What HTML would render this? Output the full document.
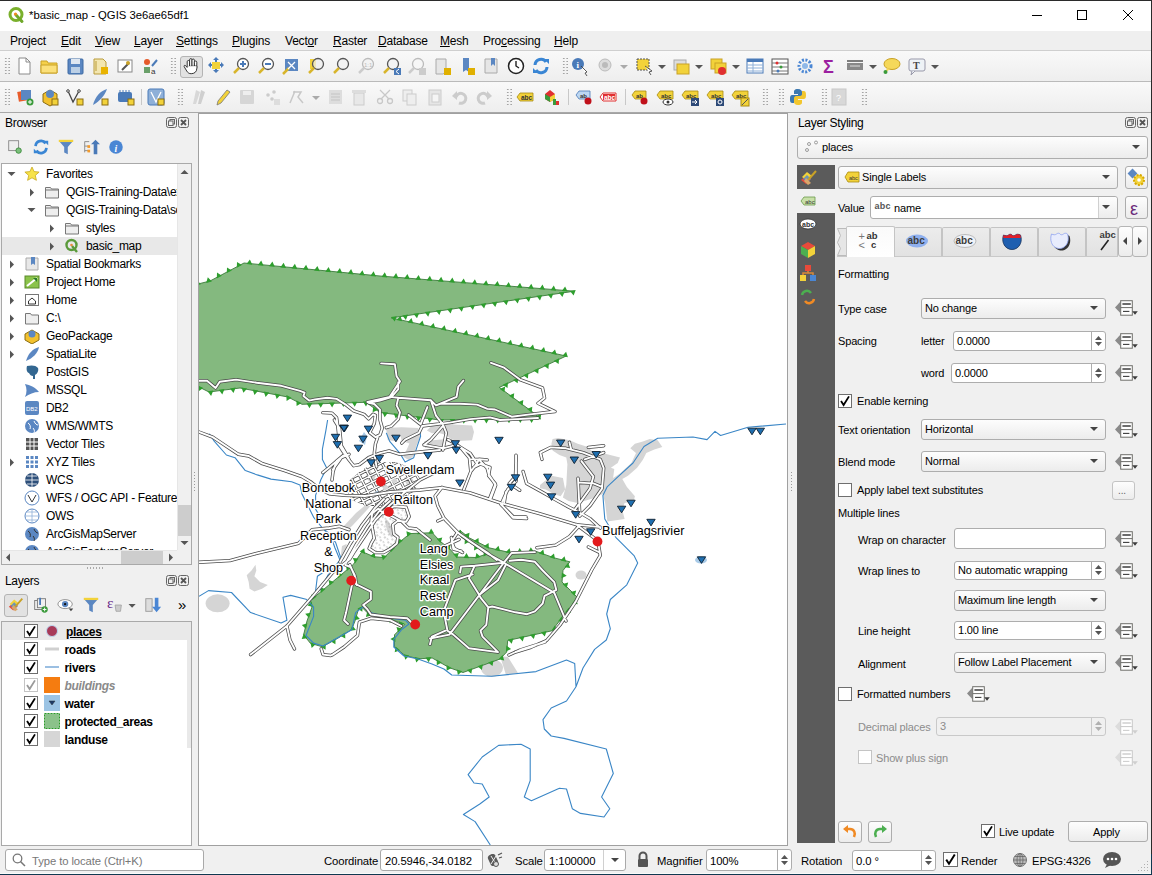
<!DOCTYPE html><html><head><meta charset="utf-8"><title>QGIS</title><style>
*{margin:0;padding:0;box-sizing:border-box}
html,body{width:1152px;height:875px;overflow:hidden;background:#f0f0f0;font-family:"Liberation Sans",sans-serif;}
.t{position:absolute;white-space:nowrap;line-height:1;}
.a{position:absolute}
</style></head><body><div style="position:absolute;left:0px;top:0px;width:1152px;height:31px;background:#fff"></div><div style="position:absolute;left:0px;top:0px;width:1152px;height:1px;background:#2b2b2b"></div><div style="position:absolute;left:1151px;top:0px;width:1px;height:875px;background:#2b2b2b"></div><svg class="a" style="left:7px;top:6px" width="18" height="18" viewBox="0 0 18 18">
<circle cx="9" cy="8.5" r="6" fill="none" stroke="#7ab02c" stroke-width="3"/>
<line x1="9" y1="9" x2="15" y2="15.5" stroke="#6fa82a" stroke-width="3" stroke-linecap="round"/>
<circle cx="8.5" cy="8" r="1.6" fill="#f08a24"/></svg><div class="t" style="left:29px;top:10px;font-size:11.3px;color:#000;font-weight:normal;font-style:normal;">*basic_map - QGIS 3e6ae65df1</div><div style="position:absolute;left:1032px;top:15px;width:10px;height:1px;background:#000"></div><div style="position:absolute;left:1077px;top:10px;width:10px;height:10px;border:1px solid #000"></div><svg class="a" style="left:1122px;top:9px" width="12" height="12"><path d="M1 1L11 11M11 1L1 11" stroke="#000" stroke-width="1"/></svg><div style="position:absolute;left:0px;top:31px;width:1151px;height:20px;background:#efefef;border-bottom:1px solid #cfcfcf"></div><div class="t" style="left:10px;top:35px;font-size:12px;color:#000;font-weight:normal;font-style:normal;letter-spacing:-0.2px;">Pro<u>j</u>ect</div><div class="t" style="left:61px;top:35px;font-size:12px;color:#000;font-weight:normal;font-style:normal;letter-spacing:-0.2px;"><u>E</u>dit</div><div class="t" style="left:95px;top:35px;font-size:12px;color:#000;font-weight:normal;font-style:normal;letter-spacing:-0.2px;"><u>V</u>iew</div><div class="t" style="left:134px;top:35px;font-size:12px;color:#000;font-weight:normal;font-style:normal;letter-spacing:-0.2px;"><u>L</u>ayer</div><div class="t" style="left:176px;top:35px;font-size:12px;color:#000;font-weight:normal;font-style:normal;letter-spacing:-0.2px;"><u>S</u>ettings</div><div class="t" style="left:232px;top:35px;font-size:12px;color:#000;font-weight:normal;font-style:normal;letter-spacing:-0.2px;"><u>P</u>lugins</div><div class="t" style="left:285px;top:35px;font-size:12px;color:#000;font-weight:normal;font-style:normal;letter-spacing:-0.2px;">Vect<u>o</u>r</div><div class="t" style="left:333px;top:35px;font-size:12px;color:#000;font-weight:normal;font-style:normal;letter-spacing:-0.2px;"><u>R</u>aster</div><div class="t" style="left:378px;top:35px;font-size:12px;color:#000;font-weight:normal;font-style:normal;letter-spacing:-0.2px;"><u>D</u>atabase</div><div class="t" style="left:440px;top:35px;font-size:12px;color:#000;font-weight:normal;font-style:normal;letter-spacing:-0.2px;"><u>M</u>esh</div><div class="t" style="left:483px;top:35px;font-size:12px;color:#000;font-weight:normal;font-style:normal;letter-spacing:-0.2px;">Pro<u>c</u>essing</div><div class="t" style="left:554px;top:35px;font-size:12px;color:#000;font-weight:normal;font-style:normal;letter-spacing:-0.2px;"><u>H</u>elp</div><div style="position:absolute;left:0px;top:51px;width:1151px;height:31px;background:linear-gradient(#f9f9f9,#eeeeee);border-bottom:1px solid #bababa"></div><div style="position:absolute;left:0px;top:82px;width:1151px;height:30px;background:linear-gradient(#f9f9f9,#eeeeee)"></div><div style="position:absolute;left:0px;top:112px;width:1151px;height:1px;background:#a8a8a8"></div><div class="a" style="left:4px;top:57px;width:6px;height:18px;background-image:radial-gradient(circle,#a4a4a4 0.75px,transparent 0.95px);background-size:3.5px 3px"></div><svg class="a" style="left:14px;top:56px" width="20" height="20" viewBox="0 0 20 20"><path d="M5 2h7l4 4v12H5z" fill="#fff" stroke="#8a8a8a"/><path d="M12 2v4h4" fill="none" stroke="#8a8a8a"/></svg><svg class="a" style="left:39px;top:56px" width="20" height="20" viewBox="0 0 20 20"><path d="M2 5h6l1 2h9v10H2z" fill="#f5d04a" stroke="#c9a227"/><path d="M2 9h16v8H2z" fill="#fbe07a" stroke="#c9a227"/></svg><svg class="a" style="left:65px;top:56px" width="20" height="20" viewBox="0 0 20 20"><rect x="3" y="3" width="15" height="15" rx="1" fill="#5b87c2" stroke="#3f6aa3"/><rect x="6" y="3" width="9" height="5" fill="#dfe7f1"/><rect x="6" y="11" width="9" height="6" fill="#bcd0e6"/></svg><svg class="a" style="left:90px;top:56px" width="20" height="20" viewBox="0 0 20 20"><path d="M4 3h9l3 3v12H4z" fill="#f3e6b0" stroke="#b99b3a"/><rect x="11" y="11" width="7" height="7" fill="#e9b300"/><path d="M6 5v10" stroke="#b99b3a"/></svg><svg class="a" style="left:115px;top:56px" width="20" height="20" viewBox="0 0 20 20"><rect x="3" y="4" width="14" height="12" fill="#fff" stroke="#888"/><path d="M7 14l7-7" stroke="#555" stroke-width="2"/><circle cx="13" cy="7" r="2" fill="#c9a227"/></svg><svg class="a" style="left:140px;top:56px" width="20" height="20" viewBox="0 0 20 20"><circle cx="7" cy="6" r="3" fill="#e55b2b"/><rect x="4" y="11" width="6" height="6" fill="#6aa06a"/><path d="M12 10l5-6" stroke="#4a7ab8" stroke-width="2"/><text x="11" y="18" font-size="8" fill="#333" font-family="Liberation Sans">a</text></svg><div class="a" style="left:170px;top:57px;width:6px;height:18px;background-image:radial-gradient(circle,#a4a4a4 0.75px,transparent 0.95px);background-size:3.5px 3px"></div><div style="position:absolute;left:180px;top:56px;width:23px;height:22px;background:#e2e2e2;border:1px solid #b4b4b4;border-radius:3px"></div><svg class="a" style="left:181px;top:56px" width="20" height="20" viewBox="0 0 20 20"><g fill="#fff" stroke="#222" stroke-width="0.9"><rect x="6.2" y="4.5" width="2.4" height="8" rx="1.2"/><rect x="8.6" y="2.6" width="2.4" height="9" rx="1.2"/><rect x="11" y="3" width="2.4" height="9" rx="1.2"/><rect x="13.4" y="5" width="2.4" height="8" rx="1.2"/><path d="M6.2 10.5v1L4.6 9.6c-.8-.8-2 .1-1.4 1.1l2.6 4.4c1 1.7 2.4 2.6 4.4 2.6 3 0 5.6-1.8 5.6-5.2V10z"/></g><path d="M6.6 10.2h8.8v1.5H6.6z" fill="#fff"/></svg><svg class="a" style="left:206px;top:56px" width="20" height="20" viewBox="0 0 20 20"><path d="M10 1l3 3h-2v4h4v-2l3 3-3 3v-2h-4v4h2l-3 3-3-3h2v-4H5v2L2 9l3-3v2h4V4H7z" fill="#4a7ab8"/><rect x="6" y="6" width="8" height="7" fill="#f2d23a"/></svg><svg class="a" style="left:231px;top:56px" width="20" height="20" viewBox="0 0 20 20"><circle cx="12" cy="8" r="5.5" fill="#fff" stroke="#555" stroke-width="1.3"/><path d="M9 8h6M12 5v6" stroke="#4a7ab8" stroke-width="2"/><path d="M8 12l-5 5" stroke="#d8b52c" stroke-width="2.5"/></svg><svg class="a" style="left:256px;top:56px" width="20" height="20" viewBox="0 0 20 20"><circle cx="12" cy="8" r="5.5" fill="#fff" stroke="#555" stroke-width="1.3"/><path d="M9 8h6" stroke="#4a7ab8" stroke-width="2"/><path d="M8 12l-5 5" stroke="#d8b52c" stroke-width="2.5"/></svg><svg class="a" style="left:280px;top:56px" width="20" height="20" viewBox="0 0 20 20"><rect x="5" y="3" width="13" height="12" fill="#5b87c2"/><path d="M3 18l6-6" stroke="#d8b52c" stroke-width="2.5"/><path d="M8 6l7 7M15 6l-7 7" stroke="#fff" stroke-width="1.3"/></svg><svg class="a" style="left:306px;top:56px" width="20" height="20" viewBox="0 0 20 20"><rect x="4" y="3" width="6" height="10" fill="#f2d23a"/><circle cx="12" cy="8" r="5.5" fill="#eee" fill-opacity="0.7" stroke="#555" stroke-width="1.3"/><path d="M8 12l-5 5" stroke="#d8b52c" stroke-width="2.5"/></svg><svg class="a" style="left:331px;top:56px" width="20" height="20" viewBox="0 0 20 20"><circle cx="12" cy="8" r="5.5" fill="#f3f3f3" stroke="#555" stroke-width="1.3"/><path d="M8 12l-5 5" stroke="#d8b52c" stroke-width="2.5"/></svg><svg class="a" style="left:356px;top:56px" width="20" height="20" viewBox="0 0 20 20"><circle cx="12" cy="8" r="5.5" fill="#f3f3f3" stroke="#bbb" stroke-width="1.3"/><path d="M8 12l-5 5" stroke="#ccc" stroke-width="2.5"/><text x="8" y="11" font-size="6" fill="#bbb" font-family="Liberation Sans">1:1</text></svg><svg class="a" style="left:382px;top:56px" width="20" height="20" viewBox="0 0 20 20"><circle cx="11" cy="8" r="5.5" fill="#f3f3f3" stroke="#555" stroke-width="1.3"/><path d="M7 12l-5 5" stroke="#d8b52c" stroke-width="2.5"/><rect x="12" y="12" width="7" height="7" fill="#4a7ab8"/><path d="M17 13l-3 2.5 3 2.5" stroke="#fff" fill="none"/></svg><svg class="a" style="left:407px;top:56px" width="20" height="20" viewBox="0 0 20 20"><circle cx="11" cy="8" r="5.5" fill="#f6f6f6" stroke="#bbb" stroke-width="1.3"/><path d="M7 12l-5 5" stroke="#ccc" stroke-width="2.5"/><rect x="12" y="12" width="7" height="7" fill="#ccc"/></svg><svg class="a" style="left:432px;top:56px" width="20" height="20" viewBox="0 0 20 20"><path d="M4 3h10v13l-3 2H4z" fill="#e6e6e6" stroke="#aaa"/><rect x="12" y="12" width="7" height="7" fill="#e0b000"/></svg><svg class="a" style="left:457px;top:56px" width="20" height="20" viewBox="0 0 20 20"><path d="M6 2h6v14l-3-2-3 2z" fill="#5b87c2"/><rect x="11" y="12" width="7" height="7" fill="#e0b000"/></svg><svg class="a" style="left:481px;top:56px" width="20" height="20" viewBox="0 0 20 20"><path d="M4 3h12v14H4z" fill="#e6e6e6" stroke="#aaa"/><path d="M10 2h4v8l-2-2-2 2z" fill="#5b87c2"/></svg><svg class="a" style="left:506px;top:56px" width="20" height="20" viewBox="0 0 20 20"><circle cx="10" cy="10" r="7.5" fill="#fff" stroke="#222" stroke-width="1.5"/><path d="M10 5v5l3 2" stroke="#222" stroke-width="1.4" fill="none"/></svg><svg class="a" style="left:531px;top:56px" width="20" height="20" viewBox="0 0 20 20"><path d="M4 9a6 6 0 0 1 11-3" stroke="#3a86d4" stroke-width="3" fill="none"/><path d="M16 11a6 6 0 0 1-11 3" stroke="#3a86d4" stroke-width="3" fill="none"/><path d="M13 3h5v5z M7 17H2v-5z" fill="#3a86d4"/></svg><div class="a" style="left:562px;top:57px;width:6px;height:18px;background-image:radial-gradient(circle,#a4a4a4 0.75px,transparent 0.95px);background-size:3.5px 3px"></div><svg class="a" style="left:570px;top:56px" width="20" height="20" viewBox="0 0 20 20"><circle cx="8" cy="8" r="6" fill="#4a7ab8"/><text x="6.5" y="12" font-size="9" font-weight="bold" fill="#fff" font-family="Liberation Serif">i</text><path d="M11 10l6 6-2 1 2 3" stroke="#333" fill="#fff" stroke-width="0.8"/></svg><svg class="a" style="left:596px;top:56px" width="20" height="20" viewBox="0 0 20 20"><circle cx="9" cy="9" r="6" fill="#ddd" stroke="#bbb"/><circle cx="9" cy="9" r="3" fill="#bbb"/></svg><svg class="a" style="left:614px;top:56px" width="20" height="20" viewBox="0 0 20 20"><path d="M6 9h8l-4 4z" fill="#aaa"/></svg><svg class="a" style="left:634px;top:56px" width="20" height="20" viewBox="0 0 20 20"><rect x="3" y="3" width="12" height="11" fill="#f2d23a" stroke="#555" stroke-dasharray="2 1"/><path d="M11 10l7 5-3 1 2 3" fill="#fff" stroke="#333" stroke-width="0.8"/></svg><svg class="a" style="left:652px;top:56px" width="20" height="20" viewBox="0 0 20 20"><path d="M6 9h8l-4 4z" fill="#555"/></svg><svg class="a" style="left:671px;top:56px" width="20" height="20" viewBox="0 0 20 20"><rect x="3" y="4" width="12" height="10" fill="#ddd" stroke="#aaa"/><rect x="6" y="8" width="12" height="10" fill="#f2d23a" stroke="#c9a227"/></svg><svg class="a" style="left:689px;top:56px" width="20" height="20" viewBox="0 0 20 20"><path d="M6 9h8l-4 4z" fill="#555"/></svg><svg class="a" style="left:708px;top:56px" width="20" height="20" viewBox="0 0 20 20"><rect x="3" y="3" width="11" height="10" fill="#f2d23a" stroke="#c9a227"/><rect x="7" y="7" width="11" height="10" fill="#f2d23a" stroke="#c9a227"/><circle cx="14" cy="15" r="4" fill="#e03030"/></svg><svg class="a" style="left:726px;top:56px" width="20" height="20" viewBox="0 0 20 20"><path d="M6 9h8l-4 4z" fill="#555"/></svg><svg class="a" style="left:745px;top:56px" width="20" height="20" viewBox="0 0 20 20"><rect x="2" y="3" width="16" height="14" fill="#fff" stroke="#4a7ab8"/><rect x="2" y="3" width="16" height="3" fill="#4a7ab8"/><path d="M2 9h16M2 12h16M2 15h16M8 6v11" stroke="#8fb0d8"/></svg><svg class="a" style="left:770px;top:56px" width="20" height="20" viewBox="0 0 20 20"><rect x="2" y="3" width="16" height="15" fill="#fff" stroke="#555"/><path d="M2 7h16M2 11h16M2 15h16" stroke="#777"/><circle cx="7" cy="7" r="1.5" fill="#e03030"/><circle cx="11" cy="11" r="1.5" fill="#3a9a3a"/><circle cx="8" cy="15" r="1.5" fill="#4a7ab8"/></svg><svg class="a" style="left:795px;top:56px" width="20" height="20" viewBox="0 0 20 20"><circle cx="10" cy="10" r="6" fill="none" stroke="#4a86d4" stroke-width="3" stroke-dasharray="2 1.5"/><circle cx="10" cy="10" r="3" fill="#8fb8e8"/></svg><svg class="a" style="left:820px;top:56px" width="20" height="20" viewBox="0 0 20 20"><text x="3" y="17" font-size="18" font-weight="bold" fill="#9b1fa0" font-family="Liberation Sans">&#931;</text></svg><svg class="a" style="left:845px;top:56px" width="20" height="20" viewBox="0 0 20 20"><rect x="2" y="7" width="16" height="7" fill="#888"/><path d="M2 5h16" stroke="#555" stroke-width="1.5"/><path d="M5 10h10" stroke="#ddd"/></svg><svg class="a" style="left:863px;top:56px" width="20" height="20" viewBox="0 0 20 20"><path d="M6 9h8l-4 4z" fill="#555"/></svg><svg class="a" style="left:881px;top:56px" width="20" height="20" viewBox="0 0 20 20"><ellipse cx="11" cy="8" rx="8" ry="5.5" fill="#f5d85a" stroke="#c9a227"/><path d="M6 12l-2 5 5-4" fill="#f5d85a"/><circle cx="4.5" cy="16" r="2" fill="#3a9a3a"/></svg><svg class="a" style="left:907px;top:56px" width="20" height="20" viewBox="0 0 20 20"><rect x="2" y="3" width="16" height="12" rx="2" fill="#eef2f6" stroke="#99a"/><path d="M5 15l-1 4 4-4" fill="#eef2f6" stroke="#99a"/><text x="6" y="13" font-size="10" font-weight="bold" fill="#444" font-family="Liberation Serif">T</text></svg><svg class="a" style="left:925px;top:56px" width="20" height="20" viewBox="0 0 20 20"><path d="M6 9h8l-4 4z" fill="#555"/></svg><div class="a" style="left:4px;top:88px;width:6px;height:18px;background-image:radial-gradient(circle,#a4a4a4 0.75px,transparent 0.95px);background-size:3.5px 3px"></div><svg class="a" style="left:15px;top:87px" width="20" height="20" viewBox="0 0 20 20"><rect x="3" y="4" width="10" height="10" fill="#e85c2b" transform="rotate(-10 8 9)"/><rect x="6" y="3" width="10" height="10" fill="#5b87c2"/><circle cx="15" cy="15" r="3.5" fill="#3a9a3a"/><path d="M13 15h4M15 13v4" stroke="#fff"/></svg><svg class="a" style="left:40px;top:87px" width="20" height="20" viewBox="0 0 20 20"><path d="M3 7l7-4 7 4v8l-7 4-7-4z" fill="#f2c12e" stroke="#8a6d14"/><circle cx="10" cy="7" r="4" fill="#5b87c2"/><rect x="12" y="12" width="6" height="6" fill="#f2d23a" stroke="#8a6d14"/></svg><svg class="a" style="left:65px;top:87px" width="20" height="20" viewBox="0 0 20 20"><path d="M3 4l5 11 6-11" fill="none" stroke="#444" stroke-width="1.3"/><circle cx="3" cy="4" r="1.3" fill="#fff" stroke="#444"/><circle cx="14" cy="4" r="1.3" fill="#fff" stroke="#444"/><rect x="12" y="12" width="6" height="6" fill="#f2d23a" stroke="#8a6d14"/></svg><svg class="a" style="left:90px;top:87px" width="20" height="20" viewBox="0 0 20 20"><path d="M3 18C5 10 10 4 17 2c-2 6-7 12-14 16z" fill="#5b87c2"/><rect x="12" y="12" width="6" height="6" fill="#f2d23a" stroke="#8a6d14"/></svg><svg class="a" style="left:116px;top:87px" width="20" height="20" viewBox="0 0 20 20"><rect x="2" y="5" width="14" height="10" rx="2" fill="#4a7ab8"/><path d="M4 3v3M7 3v3M10 3v3M13 3v3" stroke="#4a7ab8"/><rect x="12" y="12" width="6" height="6" fill="#f2d23a" stroke="#8a6d14"/></svg><div style="position:absolute;left:141px;top:89px;width:1px;height:16px;background:#c8c8c8"></div><svg class="a" style="left:146px;top:87px" width="20" height="20" viewBox="0 0 20 20"><rect x="2" y="2" width="16" height="16" rx="2" fill="#8fb0d8" stroke="#4a7ab8"/><path d="M5 5l5 10 5-10" fill="none" stroke="#fff" stroke-width="1.3"/><rect x="12" y="12" width="6" height="6" fill="#f2d23a" stroke="#8a6d14"/></svg><div class="a" style="left:177px;top:88px;width:6px;height:18px;background-image:radial-gradient(circle,#a4a4a4 0.75px,transparent 0.95px);background-size:3.5px 3px"></div><svg class="a" style="left:189px;top:87px" width="20" height="20" viewBox="0 0 20 20"><path d="M4 17l3-14 4 2-4 12z" fill="#d8d8d8"/><path d="M9 17l3-14 4 2-4 12z" fill="#cfcfcf"/></svg><svg class="a" style="left:213px;top:87px" width="20" height="20" viewBox="0 0 20 20"><path d="M4 18l1-4 9-11 3 2-9 11z" fill="#f2d23a" stroke="#777" stroke-width="0.8"/></svg><svg class="a" style="left:237px;top:87px" width="20" height="20" viewBox="0 0 20 20"><rect x="3" y="3" width="14" height="14" rx="1" fill="#d6d6d6"/><rect x="6" y="4" width="8" height="4" fill="#eee"/></svg><svg class="a" style="left:262px;top:87px" width="20" height="20" viewBox="0 0 20 20"><circle cx="6" cy="8" r="1.8" fill="#ccc"/><circle cx="12" cy="5" r="1.8" fill="#ccc"/><circle cx="10" cy="12" r="1.8" fill="#ccc"/><rect x="12" y="12" width="6" height="6" fill="#ddd"/></svg><svg class="a" style="left:287px;top:87px" width="20" height="20" viewBox="0 0 20 20"><path d="M3 16l5-12M6 5h8l-3 5 5 6" fill="none" stroke="#c8c8c8" stroke-width="1.5"/></svg><svg class="a" style="left:306px;top:87px" width="20" height="20" viewBox="0 0 20 20"><path d="M6 9h8l-4 4z" fill="#aaa"/></svg><svg class="a" style="left:325px;top:87px" width="20" height="20" viewBox="0 0 20 20"><rect x="4" y="3" width="13" height="14" fill="#ddd"/><path d="M6 7h9M6 10h9M6 13h9" stroke="#c3c3c3"/></svg><svg class="a" style="left:349px;top:87px" width="20" height="20" viewBox="0 0 20 20"><rect x="5" y="6" width="10" height="12" fill="#e8e8e8" stroke="#ccc"/><rect x="3" y="3" width="14" height="3" fill="#ddd"/></svg><svg class="a" style="left:375px;top:87px" width="20" height="20" viewBox="0 0 20 20"><circle cx="5" cy="14" r="2.5" fill="none" stroke="#c8c8c8" stroke-width="1.3"/><circle cx="15" cy="14" r="2.5" fill="none" stroke="#c8c8c8" stroke-width="1.3"/><path d="M6 12l9-9M14 12L5 3" stroke="#c8c8c8" stroke-width="1.3"/></svg><svg class="a" style="left:399px;top:87px" width="20" height="20" viewBox="0 0 20 20"><rect x="4" y="3" width="9" height="11" fill="#eee" stroke="#ccc"/><rect x="8" y="7" width="9" height="11" fill="#eee" stroke="#ccc"/></svg><svg class="a" style="left:425px;top:87px" width="20" height="20" viewBox="0 0 20 20"><rect x="4" y="3" width="12" height="15" fill="#e6e6e6" stroke="#ccc"/><rect x="7" y="7" width="7" height="8" fill="#f5f5f5" stroke="#ccc"/></svg><svg class="a" style="left:450px;top:87px" width="20" height="20" viewBox="0 0 20 20"><path d="M6 10a5 5 0 1 1 3 6" fill="none" stroke="#ccc" stroke-width="3"/><path d="M2 9l5-5v9z" fill="#ccc"/></svg><svg class="a" style="left:474px;top:87px" width="20" height="20" viewBox="0 0 20 20"><path d="M14 10a5 5 0 1 0-3 6" fill="none" stroke="#ccc" stroke-width="3"/><path d="M18 9l-5-5v9z" fill="#ccc"/></svg><div class="a" style="left:506px;top:88px;width:6px;height:18px;background-image:radial-gradient(circle,#a4a4a4 0.75px,transparent 0.95px);background-size:3.5px 3px"></div><svg class="a" style="left:515px;top:87px" width="20" height="20" viewBox="0 0 20 20"><path d="M2 10l3-4h13v8H5z" fill="#f2d23a" stroke="#a88a10" stroke-width="0.8"/><text x="6" y="12.5" font-size="6.5" font-weight="bold" fill="#333" font-family="Liberation Sans">abc</text></svg><svg class="a" style="left:541px;top:87px" width="20" height="20" viewBox="0 0 20 20"><path d="M4 7l5-4 5 4v5l-5 3-5-3z" fill="#e03030"/><path d="M4 7l5 3v5l-5-3z" fill="#3a9a3a"/><path d="M9 10l5-3v5l-5 3z" fill="#f2d23a"/><rect x="12" y="12" width="3" height="6" fill="#3a9a3a"/><rect x="15" y="14" width="3" height="4" fill="#e03030"/></svg><div style="position:absolute;left:568px;top:89px;width:1px;height:16px;background:#c8c8c8"></div><svg class="a" style="left:574px;top:87px" width="20" height="20" viewBox="0 0 20 20"><path d="M2 8l3-4h11v8H5z" fill="#bcd6f2" stroke="#4a7ab8" stroke-width="0.8"/><text x="6" y="10.5" font-size="6" font-weight="bold" fill="#333" font-family="Liberation Sans">ab</text><circle cx="14" cy="14" r="3.5" fill="#c0101a"/></svg><svg class="a" style="left:598px;top:87px" width="20" height="20" viewBox="0 0 20 20"><path d="M2 10l3-4h13v8H5z" fill="#fff" stroke="#e03030" stroke-width="1"/><path d="M5 7h12v6H5z" fill="#e03030"/><text x="6" y="12.5" font-size="6.5" font-weight="bold" fill="#fff" font-family="Liberation Sans">abc</text></svg><div style="position:absolute;left:625px;top:89px;width:1px;height:16px;background:#c8c8c8"></div><svg class="a" style="left:630px;top:87px" width="20" height="20" viewBox="0 0 20 20"><path d="M2 8l3-4h11v8H5z" fill="#f2d23a" stroke="#a88a10" stroke-width="0.8"/><text x="6" y="10.5" font-size="6" font-weight="bold" fill="#333" font-family="Liberation Sans">ab</text><circle cx="14" cy="14" r="3.5" fill="#c0101a"/></svg><svg class="a" style="left:655px;top:87px" width="20" height="20" viewBox="0 0 20 20"><path d="M2 8l3-4h13v8H5z" fill="#f2d23a" stroke="#a88a10" stroke-width="0.8"/><text x="6" y="10.5" font-size="6" font-weight="bold" fill="#333" font-family="Liberation Sans">abc</text><ellipse cx="13" cy="15" rx="5" ry="3" fill="#fff" stroke="#333"/><circle cx="13" cy="15" r="1.5" fill="#333"/></svg><svg class="a" style="left:680px;top:87px" width="20" height="20" viewBox="0 0 20 20"><path d="M2 8l3-4h13v8H5z" fill="#f2d23a" stroke="#a88a10" stroke-width="0.8"/><text x="6" y="10.5" font-size="6" font-weight="bold" fill="#333" font-family="Liberation Sans">abc</text><rect x="11" y="11" width="8" height="8" fill="#2e4a78"/><path d="M12 15h5M15 13l2 2-2 2" stroke="#fff" fill="none"/></svg><svg class="a" style="left:705px;top:87px" width="20" height="20" viewBox="0 0 20 20"><path d="M2 8l3-4h13v8H5z" fill="#f2d23a" stroke="#a88a10" stroke-width="0.8"/><text x="6" y="10.5" font-size="6" font-weight="bold" fill="#333" font-family="Liberation Sans">abc</text><rect x="11" y="11" width="8" height="8" fill="#2e4a78"/><circle cx="15" cy="15" r="2" fill="none" stroke="#fff"/></svg><svg class="a" style="left:730px;top:87px" width="20" height="20" viewBox="0 0 20 20"><path d="M2 8l3-4h13v8H5z" fill="#f2d23a" stroke="#a88a10" stroke-width="0.8"/><text x="6" y="10.5" font-size="6" font-weight="bold" fill="#333" font-family="Liberation Sans">abc</text><rect x="11" y="11" width="8" height="8" fill="#f2d23a" stroke="#a88a10"/><path d="M12 18l6-6" stroke="#555"/></svg><div class="a" style="left:762px;top:88px;width:6px;height:18px;background-image:radial-gradient(circle,#a4a4a4 0.75px,transparent 0.95px);background-size:3.5px 3px"></div><div class="a" style="left:778px;top:88px;width:6px;height:18px;background-image:radial-gradient(circle,#a4a4a4 0.75px,transparent 0.95px);background-size:3.5px 3px"></div><svg class="a" style="left:788px;top:87px" width="20" height="20" viewBox="0 0 20 20"><path d="M10 2c-4 0-4 2-4 3v2h4v1H4c-2 0-2 3-2 4s0 4 2 4h2v-3c0-1 1-2 2-2h4c1 0 2-1 2-2V5c0-1-1-3-4-3z" fill="#3c78b0"/><path d="M10 18c4 0 4-2 4-3v-2h-4v-1h6c2 0 2-3 2-4s0-4-2-4h-2v3c0 1-1 2-2 2H8c-1 0-2 1-2 2v4c0 1 1 3 4 3z" fill="#f2c62e"/></svg><div class="a" style="left:821px;top:88px;width:6px;height:18px;background-image:radial-gradient(circle,#a4a4a4 0.75px,transparent 0.95px);background-size:3.5px 3px"></div><svg class="a" style="left:829px;top:87px" width="20" height="20" viewBox="0 0 20 20"><rect x="3" y="2" width="14" height="16" fill="#d8d8d8" stroke="#c8c8c8"/><text x="7" y="14" font-size="9" fill="#fff" font-family="Liberation Sans">?</text></svg><div class="a" style="left:861px;top:88px;width:6px;height:18px;background-image:radial-gradient(circle,#a4a4a4 0.75px,transparent 0.95px);background-size:3.5px 3px"></div><div class="t" style="left:5px;top:116.84px;font-size:12px;color:#000;font-weight:normal;font-style:normal;letter-spacing:-0.3px;">Browser</div><svg class="a" style="left:166px;top:117px" width="24" height="12" viewBox="0 0 24 12">
<rect x="0.5" y="0.5" width="10" height="10" rx="2" fill="none" stroke="#666"/>
<rect x="4" y="2.5" width="4.5" height="4.5" fill="none" stroke="#666"/><rect x="2.5" y="4" width="4.5" height="4.5" fill="#f0f0f0" stroke="#666"/>
<rect x="12.5" y="0.5" width="10" height="10" rx="2" fill="none" stroke="#666"/>
<path d="M15 3l5 5M20 3l-5 5" stroke="#555" stroke-width="1.8"/></svg><svg class="a" style="left:6px;top:138px" width="18" height="18" viewBox="0 0 20 20"><rect x="3" y="3" width="11" height="11" fill="#eee" stroke="#888"/><circle cx="14" cy="14" r="3" fill="#7bbf7b" stroke="#3a8a3a"/></svg><svg class="a" style="left:32px;top:138px" width="18" height="18" viewBox="0 0 20 20"><path d="M4 9a6 6 0 0 1 11-3" stroke="#3a86d4" stroke-width="3" fill="none"/><path d="M16 11a6 6 0 0 1-11 3" stroke="#3a86d4" stroke-width="3" fill="none"/><path d="M13 3h5v5z M7 17H2v-5z" fill="#3a86d4"/></svg><svg class="a" style="left:57px;top:138px" width="18" height="18" viewBox="0 0 20 20"><path d="M2 3h16l-6 7v8l-4-2v-6z" fill="#5b87c2"/><rect x="2" y="2" width="16" height="2.5" fill="#f2d23a"/></svg><svg class="a" style="left:82px;top:138px" width="18" height="18" viewBox="0 0 20 20"><path d="M3 4h5M3 4v12M3 9h4M3 14h4" stroke="#888" fill="none"/><rect x="6" y="8" width="3" height="3" fill="#f39a2b"/><rect x="6" y="13" width="3" height="3" fill="#f39a2b"/><path d="M13 18V7h-3l5-5 5 5h-3v11z" fill="#4a7ab8"/></svg><svg class="a" style="left:107px;top:138px" width="18" height="18" viewBox="0 0 20 20"><circle cx="10" cy="10" r="7.5" fill="#4a86d4"/><text x="8.3" y="15" font-size="11" font-style="italic" font-weight="bold" fill="#fff" font-family="Liberation Serif">i</text></svg><div style="position:absolute;left:1px;top:163px;width:191px;height:402px;background:#fff;border:1px solid #a9a9a9"></div><div style="position:absolute;left:2px;top:237px;width:175px;height:18px;background:#e8e8e8"></div><div class="a" style="left:2px;top:164px;width:175px;height:386px;overflow:hidden"><svg class="a" style="left:5px;top:7px" width="9" height="6"><path d="M0.5 1L8.5 1 4.5 5z" fill="#555"/></svg><svg class="a" style="left:22px;top:2px" width="16" height="16" viewBox="0 0 16 16"><path d="M8 1l2.1 4.6 5 .5-3.8 3.3 1.1 4.9L8 11.8l-4.4 2.5 1.1-4.9L.9 6.1l5-.5z" fill="#f7e34a" stroke="#c8a820" stroke-width="0.8"/></svg><div class="t" style="left:44px;top:3.84px;font-size:12px;color:#000;font-weight:normal;font-style:normal;letter-spacing:-0.3px;">Favorites</div><svg class="a" style="left:27px;top:23.5px" width="6" height="9"><path d="M1 0.5L5 4.5 1 8.5z" fill="#555"/></svg><svg class="a" style="left:42px;top:20px" width="16" height="16" viewBox="0 0 16 16"><path d="M1.5 3.5h5l1 1.5h7v9h-13z" fill="#eee" stroke="#777"/><path d="M1.5 6h13" stroke="#777"/></svg><div class="t" style="left:64px;top:21.84px;font-size:12px;color:#000;font-weight:normal;font-style:normal;letter-spacing:-0.3px;">QGIS-Training-Data\exercise_data</div><svg class="a" style="left:25px;top:43px" width="9" height="6"><path d="M0.5 1L8.5 1 4.5 5z" fill="#555"/></svg><svg class="a" style="left:42px;top:38px" width="16" height="16" viewBox="0 0 16 16"><path d="M1.5 3.5h5l1 1.5h7v9h-13z" fill="#eee" stroke="#777"/><path d="M1.5 6h13" stroke="#777"/></svg><div class="t" style="left:64px;top:39.84px;font-size:12px;color:#000;font-weight:normal;font-style:normal;letter-spacing:-0.3px;">QGIS-Training-Data\solution</div><svg class="a" style="left:47px;top:59.5px" width="6" height="9"><path d="M1 0.5L5 4.5 1 8.5z" fill="#555"/></svg><svg class="a" style="left:62px;top:56px" width="16" height="16" viewBox="0 0 16 16"><path d="M1.5 3.5h5l1 1.5h7v9h-13z" fill="#eee" stroke="#777"/><path d="M1.5 6h13" stroke="#777"/></svg><div class="t" style="left:84px;top:57.84px;font-size:12px;color:#000;font-weight:normal;font-style:normal;letter-spacing:-0.3px;">styles</div><svg class="a" style="left:47px;top:77.5px" width="6" height="9"><path d="M1 0.5L5 4.5 1 8.5z" fill="#555"/></svg><svg class="a" style="left:62px;top:74px" width="16" height="16" viewBox="0 0 16 16"><circle cx="7.5" cy="7" r="5" fill="none" stroke="#5a9a3a" stroke-width="2.4"/><path d="M8 8l5 6" stroke="#5a9a3a" stroke-width="2.4"/><circle cx="7.5" cy="7" r="1.3" fill="#e88a3a"/></svg><div class="t" style="left:84px;top:75.84px;font-size:12px;color:#000;font-weight:normal;font-style:normal;letter-spacing:-0.3px;">basic_map</div><svg class="a" style="left:7px;top:95.5px" width="6" height="9"><path d="M1 0.5L5 4.5 1 8.5z" fill="#555"/></svg><svg class="a" style="left:22px;top:92px" width="16" height="16" viewBox="0 0 16 16"><path d="M2 2h12v12H2z" fill="#e8e8e8" stroke="#aaa"/><path d="M7 1h4v8l-2-1.5L7 9z" fill="#5b87c2"/></svg><div class="t" style="left:44px;top:93.84px;font-size:12px;color:#000;font-weight:normal;font-style:normal;letter-spacing:-0.3px;">Spatial Bookmarks</div><svg class="a" style="left:7px;top:113.5px" width="6" height="9"><path d="M1 0.5L5 4.5 1 8.5z" fill="#555"/></svg><svg class="a" style="left:22px;top:110px" width="16" height="16" viewBox="0 0 16 16"><rect x="1" y="2" width="14" height="12" fill="#8bc34a" stroke="#5a8a2a"/><path d="M3 12l10-8" stroke="#fff" stroke-width="2"/><path d="M9 4h4v4" fill="#2a7a2a"/></svg><div class="t" style="left:44px;top:111.84px;font-size:12px;color:#000;font-weight:normal;font-style:normal;letter-spacing:-0.3px;">Project Home</div><svg class="a" style="left:7px;top:131.5px" width="6" height="9"><path d="M1 0.5L5 4.5 1 8.5z" fill="#555"/></svg><svg class="a" style="left:22px;top:128px" width="16" height="16" viewBox="0 0 16 16"><rect x="1.5" y="2.5" width="13" height="11" fill="#fff" stroke="#777"/><path d="M4.5 9l3.5-3 3.5 3v3h-7z" fill="none" stroke="#333"/></svg><div class="t" style="left:44px;top:129.84px;font-size:12px;color:#000;font-weight:normal;font-style:normal;letter-spacing:-0.3px;">Home</div><svg class="a" style="left:7px;top:149.5px" width="6" height="9"><path d="M1 0.5L5 4.5 1 8.5z" fill="#555"/></svg><svg class="a" style="left:22px;top:146px" width="16" height="16" viewBox="0 0 16 16"><path d="M1.5 3.5h5l1 1.5h7v9h-13z" fill="#eee" stroke="#777"/></svg><div class="t" style="left:44px;top:147.84px;font-size:12px;color:#000;font-weight:normal;font-style:normal;letter-spacing:-0.3px;">C:\</div><svg class="a" style="left:7px;top:167.5px" width="6" height="9"><path d="M1 0.5L5 4.5 1 8.5z" fill="#555"/></svg><svg class="a" style="left:22px;top:164px" width="16" height="16" viewBox="0 0 16 16"><path d="M1 6l7-4 7 4v6l-7 4-7-4z" fill="#f2c12e" stroke="#8a6d14"/><circle cx="8" cy="6" r="3.5" fill="#5b87c2"/></svg><div class="t" style="left:44px;top:165.84px;font-size:12px;color:#000;font-weight:normal;font-style:normal;letter-spacing:-0.3px;">GeoPackage</div><svg class="a" style="left:7px;top:185.5px" width="6" height="9"><path d="M1 0.5L5 4.5 1 8.5z" fill="#555"/></svg><svg class="a" style="left:22px;top:182px" width="16" height="16" viewBox="0 0 16 16"><path d="M2 15C4 8 8 3 15 1c-1 6-6 11-13 14z" fill="#5b87c2"/></svg><div class="t" style="left:44px;top:183.84px;font-size:12px;color:#000;font-weight:normal;font-style:normal;letter-spacing:-0.3px;">SpatiaLite</div><svg class="a" style="left:22px;top:200px" width="16" height="16" viewBox="0 0 16 16"><path d="M3 2c4-1 9-1 11 2 1 3-1 6-3 7v4H9v-3c-2 0-3-1-4-3-2 0-3-4-2-7z" fill="#336791"/></svg><div class="t" style="left:44px;top:201.84px;font-size:12px;color:#000;font-weight:normal;font-style:normal;letter-spacing:-0.3px;">PostGIS</div><svg class="a" style="left:22px;top:218px" width="16" height="16" viewBox="0 0 16 16"><path d="M1 2c5 1 10 3 14 8-5 0-10 2-14 5 2-4 2-9 0-13z" fill="#5b87c2"/></svg><div class="t" style="left:44px;top:219.84px;font-size:12px;color:#000;font-weight:normal;font-style:normal;letter-spacing:-0.3px;">MSSQL</div><svg class="a" style="left:22px;top:236px" width="16" height="16" viewBox="0 0 16 16"><rect x="1" y="1" width="14" height="14" rx="2" fill="#5b87c2"/><text x="2" y="10.5" font-size="6" fill="#fff" font-family="Liberation Sans">DB2</text></svg><div class="t" style="left:44px;top:237.84px;font-size:12px;color:#000;font-weight:normal;font-style:normal;letter-spacing:-0.3px;">DB2</div><svg class="a" style="left:22px;top:254px" width="16" height="16" viewBox="0 0 16 16"><circle cx="8" cy="8" r="7" fill="#5b87c2"/><path d="M4 5c2 1 3 4 2 6M10 3c1 3 3 4 4 4M9 10c1 1 2 3 1 5" stroke="#fff" fill="none"/></svg><div class="t" style="left:44px;top:255.84px;font-size:12px;color:#000;font-weight:normal;font-style:normal;letter-spacing:-0.3px;">WMS/WMTS</div><svg class="a" style="left:22px;top:272px" width="16" height="16" viewBox="0 0 16 16"><rect x="2" y="2" width="12" height="12" fill="#555"/><path d="M2 6h12M2 10h12M6 2v12M10 2v12" stroke="#fff"/></svg><div class="t" style="left:44px;top:273.84px;font-size:12px;color:#000;font-weight:normal;font-style:normal;letter-spacing:-0.3px;">Vector Tiles</div><svg class="a" style="left:7px;top:293.5px" width="6" height="9"><path d="M1 0.5L5 4.5 1 8.5z" fill="#555"/></svg><svg class="a" style="left:22px;top:290px" width="16" height="16" viewBox="0 0 16 16"><rect x="2" y="2" width="3" height="3" fill="#5b87c2"/><rect x="6.5" y="2" width="3" height="3" fill="#5b87c2"/><rect x="11" y="2" width="3" height="3" fill="#5b87c2"/><rect x="2" y="6.5" width="3" height="3" fill="#5b87c2"/><rect x="6.5" y="6.5" width="3" height="3" fill="#5b87c2"/><rect x="11" y="6.5" width="3" height="3" fill="#5b87c2"/><rect x="2" y="11" width="3" height="3" fill="#5b87c2"/><rect x="6.5" y="11" width="3" height="3" fill="#5b87c2"/><rect x="11" y="11" width="3" height="3" fill="#5b87c2"/></svg><div class="t" style="left:44px;top:291.84px;font-size:12px;color:#000;font-weight:normal;font-style:normal;letter-spacing:-0.3px;">XYZ Tiles</div><svg class="a" style="left:22px;top:308px" width="16" height="16" viewBox="0 0 16 16"><circle cx="8" cy="8" r="7" fill="#2d4f7a"/><path d="M1 8h14M8 1v14M3 4h10M3 12h10" stroke="#fff" stroke-width="0.8"/></svg><div class="t" style="left:44px;top:309.84px;font-size:12px;color:#000;font-weight:normal;font-style:normal;letter-spacing:-0.3px;">WCS</div><svg class="a" style="left:22px;top:326px" width="16" height="16" viewBox="0 0 16 16"><circle cx="8" cy="8" r="7" fill="#fff" stroke="#5b87c2"/><path d="M4 5l4 7 4-7" stroke="#333" fill="none"/></svg><div class="t" style="left:44px;top:327.84px;font-size:12px;color:#000;font-weight:normal;font-style:normal;letter-spacing:-0.3px;">WFS / OGC API - Features</div><svg class="a" style="left:22px;top:344px" width="16" height="16" viewBox="0 0 16 16"><circle cx="8" cy="8" r="7" fill="#fff" stroke="#5b87c2"/><path d="M1 8h14M8 1v14M3 4h10M3 12h10" stroke="#8fb0d8" stroke-width="0.8"/></svg><div class="t" style="left:44px;top:345.84px;font-size:12px;color:#000;font-weight:normal;font-style:normal;letter-spacing:-0.3px;">OWS</div><svg class="a" style="left:22px;top:362px" width="16" height="16" viewBox="0 0 16 16"><circle cx="8" cy="8" r="7" fill="#5b87c2"/><path d="M4 5c2 1 3 4 2 6M10 3c1 3 3 4 4 4M9 10c1 1 2 3 1 5" stroke="#333" fill="none"/></svg><div class="t" style="left:44px;top:363.84px;font-size:12px;color:#000;font-weight:normal;font-style:normal;letter-spacing:-0.3px;">ArcGisMapServer</div><svg class="a" style="left:22px;top:380px" width="16" height="16" viewBox="0 0 16 16"><circle cx="8" cy="8" r="7" fill="#5b87c2"/><path d="M4 5c2 1 3 4 2 6M10 3c1 3 3 4 4 4M9 10c1 1 2 3 1 5" stroke="#333" fill="none"/></svg><div class="t" style="left:44px;top:381.84px;font-size:12px;color:#000;font-weight:normal;font-style:normal;letter-spacing:-0.3px;">ArcGisFeatureServer</div></div><div style="position:absolute;left:177px;top:164px;width:14px;height:386px;background:#f0f0f0;border-left:1px solid #e6e6e6"></div><svg class="a" style="left:180px;top:169px" width="9" height="6"><path d="M0.5 5L8.5 5 4.5 1z" fill="#555"/></svg><div style="position:absolute;left:178px;top:505px;width:13px;height:31px;background:#cdcdcd"></div><svg class="a" style="left:180px;top:540px" width="9" height="6"><path d="M0.5 1L8.5 1 4.5 5z" fill="#555"/></svg><div style="position:absolute;left:2px;top:550px;width:189px;height:14px;background:#f0f0f0;border-top:1px solid #e6e6e6"></div><svg class="a" style="left:5px;top:553px" width="6" height="9"><path d="M5 0.5L1 4.5 5 8.5z" fill="#555"/></svg><div style="position:absolute;left:121px;top:551px;width:42px;height:13px;background:#cdcdcd"></div><svg class="a" style="left:168px;top:553px" width="6" height="9"><path d="M1 0.5L5 4.5 1 8.5z" fill="#555"/></svg><div style="position:absolute;left:177px;top:550px;width:14px;height:14px;background:#f0f0f0"></div><div class="a" style="left:86px;top:567px;width:18px;height:2px;background-image:radial-gradient(circle,#aaa 0.7px,transparent 0.9px);background-size:3px 2px"></div><div class="t" style="left:5px;top:574.84px;font-size:12px;color:#000;font-weight:normal;font-style:normal;letter-spacing:-0.3px;">Layers</div><svg class="a" style="left:166px;top:575px" width="24" height="12" viewBox="0 0 24 12">
<rect x="0.5" y="0.5" width="10" height="10" rx="2" fill="none" stroke="#666"/>
<rect x="4" y="2.5" width="4.5" height="4.5" fill="none" stroke="#666"/><rect x="2.5" y="4" width="4.5" height="4.5" fill="#f0f0f0" stroke="#666"/>
<rect x="12.5" y="0.5" width="10" height="10" rx="2" fill="none" stroke="#666"/>
<path d="M15 3l5 5M20 3l-5 5" stroke="#555" stroke-width="1.8"/></svg><div style="position:absolute;left:4px;top:594px;width:24px;height:23px;background:#e2e2e2;border:1px solid #b4b4b4;border-radius:3px"></div><svg class="a" style="left:7px;top:596px" width="18" height="18" viewBox="0 0 20 20"><path d="M2 12l6-5 4 4-5 5z" fill="#e84a3a"/><path d="M3 9l5-5 5 4-5 5z" fill="#f2d23a"/><path d="M4 11l4-4 4 4-4 4z" fill="#4a86d4" opacity="0.8"/><path d="M9 12l8-9" stroke="#c9a227" stroke-width="2"/><path d="M7 10l5 5-3 2-4-4z" fill="#d9a66a"/></svg><svg class="a" style="left:32px;top:596px" width="18" height="18" viewBox="0 0 20 20"><rect x="3" y="5" width="9" height="10" fill="none" stroke="#777"/><rect x="6" y="3" width="9" height="10" fill="#f0f0f0" stroke="#777"/><path d="M9 2v8" stroke="#4a7ab8" stroke-width="2"/><circle cx="14" cy="15" r="3.5" fill="#3a9a3a"/><path d="M12 15h4M14 13v4" stroke="#fff"/></svg><svg class="a" style="left:57px;top:596px" width="18" height="18" viewBox="0 0 20 20"><ellipse cx="9" cy="9" rx="8" ry="5" fill="#fff" stroke="#888"/><circle cx="9" cy="9" r="3.5" fill="#5b87c2"/><circle cx="9" cy="9" r="1.3" fill="#111"/><path d="M13 14h5l-2.5 3z" fill="#444"/></svg><svg class="a" style="left:82px;top:596px" width="18" height="18" viewBox="0 0 20 20"><path d="M2 3h16l-6 7v8l-4-2v-6z" fill="#5b87c2"/><rect x="2" y="2" width="16" height="2.5" fill="#f2d23a"/></svg><svg class="a" style="left:107px;top:596px" width="18" height="18" viewBox="0 0 20 20"><text x="0" y="13" font-size="17" fill="#6a2a8a" font-family="Liberation Serif">&#949;</text><path d="M9 10h7l-1 7h-5z" fill="#ccc" stroke="#999" stroke-width="0.8"/></svg><svg class="a" style="left:124px;top:596px" width="18" height="18" viewBox="0 0 20 20"><path d="M5 9h8l-4 4z" fill="#555"/></svg><svg class="a" style="left:144px;top:596px" width="18" height="18" viewBox="0 0 20 20"><rect x="2" y="3" width="7" height="14" fill="#ddd" stroke="#999"/><path d="M12 2v10h-3l5 6 5-6h-3V2z" fill="#4a86d4"/></svg><div class="t" style="left:178px;top:597.3px;font-size:15px;color:#000;font-weight:normal;font-style:normal;letter-spacing:-0.3px;">&#187;</div><div style="position:absolute;left:1px;top:621px;width:191px;height:225px;background:#fff;border:1px solid #a9a9a9"></div><div style="position:absolute;left:2px;top:622px;width:185px;height:18px;background:#e9e9e9"></div><div style="position:absolute;left:187px;top:622px;width:4px;height:126px;background:#e9e9e9"></div><div class="a" style="left:24px;top:624px;width:14px;height:14px;background:#fff;border:1px solid #6e6e6e"></div><svg class="a" style="left:24px;top:624px" width="14" height="14" viewBox="0 0 13 13"><path d="M2.8 6.6L5.2 10.2 10.2 2.2" fill="none" stroke="#000" stroke-width="1.7"/></svg><svg class="a" style="left:44px;top:623px" width="16" height="16" viewBox="0 0 16 16"><circle cx="8" cy="8" r="5.5" fill="#a83a58" stroke="#bcd8f0" stroke-width="1"/></svg><div class="t" style="left:66px;top:625.84px;font-size:12px;color:#000;font-weight:bold;font-style:normal;text-decoration:underline;letter-spacing:-0.3px;">places</div><div class="a" style="left:24px;top:642px;width:14px;height:14px;background:#fff;border:1px solid #6e6e6e"></div><svg class="a" style="left:24px;top:642px" width="14" height="14" viewBox="0 0 13 13"><path d="M2.8 6.6L5.2 10.2 10.2 2.2" fill="none" stroke="#000" stroke-width="1.7"/></svg><svg class="a" style="left:44px;top:641px" width="16" height="16" viewBox="0 0 16 16"><path d="M1 8h14" stroke="#d0d0d0" stroke-width="3"/></svg><div class="t" style="left:64.5px;top:643.84px;font-size:12px;color:#000;font-weight:bold;font-style:normal;letter-spacing:-0.3px;">roads</div><div class="a" style="left:24px;top:660px;width:14px;height:14px;background:#fff;border:1px solid #6e6e6e"></div><svg class="a" style="left:24px;top:660px" width="14" height="14" viewBox="0 0 13 13"><path d="M2.8 6.6L5.2 10.2 10.2 2.2" fill="none" stroke="#000" stroke-width="1.7"/></svg><svg class="a" style="left:44px;top:659px" width="16" height="16" viewBox="0 0 16 16"><path d="M1 8h14" stroke="#7aaad8" stroke-width="1.5"/></svg><div class="t" style="left:64.5px;top:661.84px;font-size:12px;color:#000;font-weight:bold;font-style:normal;letter-spacing:-0.3px;">rivers</div><div class="a" style="left:24px;top:678px;width:14px;height:14px;background:#fff;border:1px solid #c4c4c4"></div><svg class="a" style="left:24px;top:678px" width="14" height="14" viewBox="0 0 13 13"><path d="M2.8 6.6L5.2 10.2 10.2 2.2" fill="none" stroke="#9a9a9a" stroke-width="1.7"/></svg><svg class="a" style="left:44px;top:677px" width="16" height="16" viewBox="0 0 16 16"><rect x="0" y="0" width="16" height="16" fill="#f57c10"/></svg><div class="t" style="left:64.5px;top:679.84px;font-size:12px;color:#8a8a8a;font-weight:bold;font-style:italic;letter-spacing:-0.3px;">buildings</div><div class="a" style="left:24px;top:696px;width:14px;height:14px;background:#fff;border:1px solid #6e6e6e"></div><svg class="a" style="left:24px;top:696px" width="14" height="14" viewBox="0 0 13 13"><path d="M2.8 6.6L5.2 10.2 10.2 2.2" fill="none" stroke="#000" stroke-width="1.7"/></svg><svg class="a" style="left:44px;top:695px" width="16" height="16" viewBox="0 0 16 16"><rect x="0" y="0" width="16" height="16" fill="#9cc4e4"/><path d="M5 6h6l-3 4z" fill="#1a3a6a" stroke="#333" stroke-width="0.5"/></svg><div class="t" style="left:64.5px;top:697.84px;font-size:12px;color:#000;font-weight:bold;font-style:normal;letter-spacing:-0.3px;">water</div><div class="a" style="left:24px;top:714px;width:14px;height:14px;background:#fff;border:1px solid #6e6e6e"></div><svg class="a" style="left:24px;top:714px" width="14" height="14" viewBox="0 0 13 13"><path d="M2.8 6.6L5.2 10.2 10.2 2.2" fill="none" stroke="#000" stroke-width="1.7"/></svg><svg class="a" style="left:44px;top:713px" width="16" height="16" viewBox="0 0 16 16"><rect x="0.5" y="0.5" width="15" height="15" fill="#8bc28a" stroke="#2a9a2a" stroke-dasharray="2 1"/></svg><div class="t" style="left:64.5px;top:715.84px;font-size:12px;color:#000;font-weight:bold;font-style:normal;letter-spacing:-0.3px;">protected_areas</div><div class="a" style="left:24px;top:732px;width:14px;height:14px;background:#fff;border:1px solid #6e6e6e"></div><svg class="a" style="left:24px;top:732px" width="14" height="14" viewBox="0 0 13 13"><path d="M2.8 6.6L5.2 10.2 10.2 2.2" fill="none" stroke="#000" stroke-width="1.7"/></svg><svg class="a" style="left:44px;top:731px" width="16" height="16" viewBox="0 0 16 16"><rect x="0" y="0" width="16" height="16" fill="#d6d6d6"/></svg><div class="t" style="left:64.5px;top:733.84px;font-size:12px;color:#000;font-weight:bold;font-style:normal;letter-spacing:-0.3px;">landuse</div><div style="position:absolute;left:198px;top:113px;width:590px;height:733px;background:#fff;border:1px solid #a0a0a0"></div><svg class="a" style="left:199px;top:114px" width="588" height="731" viewBox="199 114 588 731"><g fill="#d5d5d5"><polygon points="552.6,439.1 558.3,438.0 569.7,440.3 577.7,443.7 588.0,447.1 593.7,452.9 606.3,454.0 620.0,457.4 617.7,463.1 610.9,467.7 614.3,468.9 613.1,478.0 620.0,473.4 631.4,463.1 636.0,452.9 630.3,448.3 634.9,443.7 642.9,441.4 649.7,439.1 657.7,440.3 662.3,447.1 654.3,449.4 646.3,452.9 642.9,459.7 637.1,467.7 628.0,475.7 622.3,479.1 626.9,487.1 634.9,496.3 633.7,500.9 624.6,503.1 622.3,510.0 624.6,519.1 607.4,521.4 605.1,503.1 602.9,494.0 592.6,498.6 577.7,503.1 568.6,500.9 562.9,497.4 566.3,484.9 567.4,464.3 566.3,457.4 559.4,455.1 552.6,450.6 551.4,443.7"/><polygon points="540.0,484.9 551.4,475.7 562.9,478.0 565.1,489.4 560.6,496.3 553.7,494.0 545.7,489.4 540.0,488.3"/><ellipse cx="581" cy="575" rx="5.5" ry="4.5"/><ellipse cx="217.6" cy="603.3" rx="12" ry="9"/><polygon points="255.5,564.8 256.3,570.6 254.4,576.3 260.1,582.0 267.8,584.9 262.0,588.7 254.4,591.6 249.6,588.7 248.7,582.0 246.7,575.3 251.5,570.6"/><ellipse cx="492" cy="668" rx="11" ry="9"/><polygon points="500.0,656.0 508.0,657.0 518.0,673.0 506.0,675.0"/><polygon points="386.0,428.0 401.7,427.2 418.2,428.0 420.0,437.6 416.5,445.4 413.9,455.8 408.6,460.1 403.4,456.7 409.5,443.6 401.7,441.0 400.8,436.7 397.4,436.7 394.8,441.0 387.8,440.2"/><polygon points="426.9,430.6 432.0,425.4 440.8,421.9 447.7,422.8 453.8,424.5 472.0,425.4 474.0,432.0 472.0,440.2 458.0,441.0 451.2,439.3 446.0,435.0 437.3,432.4 432.0,433.2"/><polygon points="424.3,441.0 444.2,439.3 444.0,447.0 425.0,448.0"/><polygon points="343.0,527.0 356.0,513.0 368.0,503.0 376.0,500.0 366.0,511.0 352.0,526.0 346.0,531.0"/><polygon points="342.0,546.0 346.5,544.0 347.0,552.0 344.0,559.0 340.5,558.0"/><polygon points="369.0,470.0 376.0,476.0 372.0,483.0 365.0,478.0"/><polygon points="386.0,487.0 392.0,484.0 396.0,492.0 389.0,495.0"/><polygon points="404.0,478.0 410.0,474.0 414.0,482.0 407.0,486.0"/><ellipse cx="389" cy="528" rx="2.5" ry="9" transform="rotate(-20 389 528)"/></g><g fill="#a9cbe8"><ellipse cx="701" cy="560" rx="6" ry="3.5"/><polygon points="359,441 364,432 367,436 365,445"/></g><defs><pattern id="tg" width="8" height="4.4" patternUnits="userSpaceOnUse" patternTransform="rotate(-27)"><path d="M0.6 1.3h5.2" stroke="#3a3a3a" stroke-width="0.95"/><path d="M2 3.5h3" stroke="#888" stroke-width="0.6"/></pattern><pattern id="tr" width="5" height="6" patternUnits="userSpaceOnUse" patternTransform="rotate(-35)"><path d="M1 1h2M2.5 4h1.5" stroke="#8a8a8a" stroke-width="0.7"/></pattern></defs><clipPath id="tclip"><polygon points="350.0,480.0 362.0,470.0 376.0,462.0 395.0,462.0 412.0,468.0 420.0,478.0 414.0,492.0 400.0,500.0 384.0,506.0 366.0,506.0 352.0,500.0 346.0,490.0"/></clipPath><g clip-path="url(#tclip)"><path d="M331.1 481.3L411.3 440.4M334.1 487.1L414.2 446.2M337.0 492.8L417.2 452.0M340.0 498.6L420.1 457.8M342.9 504.4L423.1 463.6M345.9 510.2L426.0 469.4M348.8 516.0L429.0 475.2M351.8 521.8L431.9 480.9M354.7 527.6L434.9 486.7M321.7 476.0L353.4 538.3M329.2 472.1L361.0 534.5M336.8 468.3L368.6 530.6M344.4 464.4L376.2 526.8M352.0 460.5L383.7 522.9M359.5 456.7L391.3 519.0M367.1 452.8L398.9 515.2M374.7 449.0L406.5 511.3M382.3 445.1L414.0 507.5M389.8 441.2L421.6 503.6M397.4 437.4L429.2 499.7M405.0 433.5L436.8 495.9M412.6 429.7L444.3 492.0" stroke="#4a4a4a" stroke-width="2.9" fill="none"/><path d="M331.1 481.3L411.3 440.4M334.1 487.1L414.2 446.2M337.0 492.8L417.2 452.0M340.0 498.6L420.1 457.8M342.9 504.4L423.1 463.6M345.9 510.2L426.0 469.4M348.8 516.0L429.0 475.2M351.8 521.8L431.9 480.9M354.7 527.6L434.9 486.7M321.7 476.0L353.4 538.3M329.2 472.1L361.0 534.5M336.8 468.3L368.6 530.6M344.4 464.4L376.2 526.8M352.0 460.5L383.7 522.9M359.5 456.7L391.3 519.0M367.1 452.8L398.9 515.2M374.7 449.0L406.5 511.3M382.3 445.1L414.0 507.5M389.8 441.2L421.6 503.6M397.4 437.4L429.2 499.7M405.0 433.5L436.8 495.9M412.6 429.7L444.3 492.0" stroke="#fff" stroke-width="1.5" fill="none"/><rect x="383" y="486" width="5" height="4" fill="#d5d5d5" transform="rotate(-27 385 488)"/><rect x="392" y="479" width="5" height="4" fill="#d5d5d5" transform="rotate(-27 394 481)"/><rect x="374" y="492" width="5" height="3" fill="#a9cbe8" transform="rotate(-27 376 494)"/><rect x="398" y="471" width="5" height="3" fill="#a9cbe8" transform="rotate(-27 400 473)"/></g><polygon points="372.2,513.5 378.4,508.4 383.5,513.5 393.8,506.3 406.1,507.3 409.2,516.6 406.1,521.7 397.9,520.7 392.8,524.8 393.8,534.1 397.9,537.2 396.9,543.4 390.7,548.5 383.5,552.6 375.3,552.6 369.1,548.5 371.2,543.4 374.2,538.2 372.2,527.9 371.2,520.7" fill="url(#tr)"/><polygon points="194.0,285.0 210.0,281.0 244.0,263.0 380.0,276.0 574.5,291.2 391.3,317.9 566.2,356.0 499.3,387.4 533.3,412.6 540.5,418.7 440.0,420.0 380.0,412.5 366.0,402.3 302.0,404.3 288.0,397.0 240.0,388.0 209.0,392.0 199.0,387.0 194.0,386.0" fill="#84b97f" stroke="#3b7a3b" stroke-width="0.9"/><polygon points="310.4,600.5 312.0,607.0 307.0,621.0 303.6,634.8 310.4,643.3 322.4,646.8 337.9,638.2 351.6,629.6 355.0,621.0 358.5,609.0 361.9,607.3 368.8,614.2 391.0,619.3 404.8,624.5 394.5,634.8 394.5,646.8 404.8,655.4 418.5,658.8 432.2,658.0 449.4,667.7 463.0,672.5 500.0,659.0 506.7,652.0 507.7,640.5 552.4,630.7 556.3,625.0 564.0,615.2 577.7,597.7 562.0,582.0 563.0,570.5 569.9,561.8 554.3,557.9 535.0,551.0 510.0,552.6 489.0,547.8 469.6,538.0 459.9,530.4 461.0,537.0 487.0,554.0 476.0,557.5 457.0,557.0 449.4,548.5 440.4,541.5 432.2,532.7 410.0,533.6 399.6,542.0 384.2,557.6 373.9,556.7 361.9,551.6 353.3,564.5" fill="#84b97f" stroke="#3b7a3b" stroke-width="0.9"/><path d="M195.3 285.6L200.9 284.2L196.9 280.1zM206.2 282.9L211.9 281.5L207.8 277.3zM216.8 278.4L221.9 275.7L217.0 272.6zM226.8 273.1L231.9 270.4L227.0 267.4zM236.8 267.8L241.9 265.1L237.0 262.1zM246.5 264.1L252.3 264.7L249.9 259.4zM257.8 265.2L263.6 265.8L261.2 260.5zM269.0 266.3L274.8 266.8L272.4 261.6zM280.3 267.4L286.1 267.9L283.6 262.7zM291.5 268.4L297.3 269.0L294.9 263.7zM302.8 269.5L308.6 270.1L306.1 264.8zM314.0 270.6L319.8 271.2L317.4 265.9zM325.3 271.7L331.1 272.2L328.6 267.0zM336.5 272.7L342.3 273.3L339.9 268.0zM347.8 273.8L353.6 274.4L351.1 269.1zM359.0 274.9L364.8 275.5L362.4 270.2zM370.3 276.0L376.0 276.5L373.6 271.3zM381.5 277.0L387.3 277.5L384.8 272.3zM392.8 277.9L398.6 278.4L396.1 273.1zM404.1 278.8L409.9 279.2L407.4 274.0zM415.3 279.7L421.1 280.1L418.6 274.9zM426.6 280.5L432.4 281.0L429.9 275.8zM437.9 281.4L443.7 281.9L441.2 276.7zM449.1 282.3L454.9 282.8L452.4 277.5zM460.4 283.2L466.2 283.6L463.7 278.4zM471.7 284.1L477.4 284.5L474.9 279.3zM482.9 284.9L488.7 285.4L486.2 280.2zM494.2 285.8L500.0 286.3L497.5 281.1zM505.5 286.7L511.2 287.2L508.7 281.9zM516.7 287.6L522.5 288.0L520.0 282.8zM528.0 288.5L533.8 288.9L531.3 283.7zM539.3 289.3L545.0 289.8L542.5 284.6zM550.5 290.2L556.3 290.7L553.8 285.5zM561.8 291.1L567.6 291.6L565.1 286.4zM575.7 290.1L570.0 290.9L573.6 295.5zM564.6 291.7L558.8 292.6L562.4 297.1zM553.4 293.4L547.6 294.2L551.2 298.7zM542.2 295.0L536.4 295.8L540.0 300.4zM531.0 296.6L525.3 297.5L528.9 302.0zM519.8 298.3L514.1 299.1L517.7 303.6zM508.6 299.9L502.9 300.7L506.5 305.3zM497.5 301.5L491.7 302.4L495.3 306.9zM486.3 303.1L480.5 304.0L484.1 308.5zM475.1 304.8L469.4 305.6L472.9 310.1zM463.9 306.4L458.2 307.2L461.8 311.8zM452.7 308.0L447.0 308.9L450.6 313.4zM441.5 309.7L435.8 310.5L439.4 315.0zM430.4 311.3L424.6 312.1L428.2 316.7zM419.2 312.9L413.4 313.8L417.0 318.3zM408.0 314.6L402.3 315.4L405.9 319.9zM396.8 316.2L391.1 317.0L394.7 321.6zM396.6 320.0L402.2 321.2L400.5 315.7zM407.6 322.4L413.3 323.6L411.5 318.1zM418.7 324.8L424.3 326.0L422.5 320.5zM429.7 327.2L435.4 328.4L433.6 322.9zM440.7 329.6L446.4 330.8L444.6 325.3zM451.8 332.0L457.4 333.2L455.7 327.7zM462.8 334.4L468.5 335.6L466.7 330.1zM473.9 336.8L479.5 338.0L477.8 332.5zM484.9 339.2L490.6 340.4L488.8 334.9zM495.9 341.6L501.6 342.8L499.8 337.3zM507.0 344.0L512.6 345.3L510.9 339.8zM518.0 346.4L523.7 347.7L521.9 342.2zM529.1 348.8L534.7 350.1L533.0 344.6zM540.1 351.2L545.8 352.5L544.0 347.0zM551.1 353.6L556.8 354.9L555.0 349.4zM562.2 356.0L567.9 357.3L566.1 351.8zM559.1 358.3L553.9 360.8L558.6 364.1zM548.9 363.1L543.7 365.6L548.4 368.9zM538.7 367.9L533.4 370.4L538.2 373.7zM528.4 372.7L523.2 375.2L527.9 378.5zM518.2 377.5L513.0 380.0L517.7 383.3zM508.0 382.3L502.7 384.8L507.5 388.1zM499.8 388.9L504.5 392.3L505.1 386.6zM508.9 395.6L513.5 399.1L514.2 393.3zM518.0 402.3L522.6 405.8L523.3 400.1zM527.0 409.1L531.7 412.5L532.3 406.8zM535.9 416.0L540.3 419.7L541.3 414.0zM534.5 417.9L528.7 418.0L531.6 422.9zM523.2 418.0L517.4 418.1L520.3 423.1zM511.9 418.2L506.1 418.2L509.0 423.2zM500.6 418.3L494.8 418.4L497.7 423.4zM489.3 418.5L483.5 418.5L486.4 423.5zM478.0 418.6L472.2 418.7L475.1 423.6zM466.7 418.8L460.9 418.8L463.8 423.8zM455.4 418.9L449.6 419.0L452.5 423.9zM444.1 419.0L438.3 419.1L441.2 424.1zM432.9 418.2L427.2 417.5L429.5 422.8zM421.7 416.8L416.0 416.1L418.2 421.4zM410.5 415.4L404.8 414.7L407.0 420.0zM399.3 414.0L393.6 413.3L395.8 418.6zM388.1 412.6L382.3 411.9L384.6 417.2zM377.9 409.9L373.2 406.4L372.6 412.2zM368.7 401.3L362.9 401.5L366.0 406.4zM357.4 401.7L351.6 401.8L354.7 406.8zM346.2 402.0L340.4 402.2L343.4 407.1zM334.9 402.4L329.1 402.6L332.1 407.5zM323.6 402.7L317.8 402.9L320.8 407.8zM312.3 403.1L306.5 403.3L309.5 408.2zM301.5 403.0L296.4 400.4L296.6 406.1zM291.5 397.8L286.4 395.1L286.6 400.9zM280.5 394.7L274.8 393.6L276.7 399.1zM269.4 392.6L263.7 391.5L265.6 397.0zM258.3 390.5L252.6 389.4L254.5 394.9zM247.2 388.4L241.5 387.4L243.4 392.8zM235.7 387.6L230.0 388.4L233.5 393.0zM224.5 389.1L218.8 389.8L222.3 394.4zM213.3 390.5L207.6 391.3L211.1 395.9zM203.3 388.1L198.1 385.6L198.5 391.3zM194.9 384.2L194.9 378.4L189.9 381.3zM194.9 372.9L194.9 367.1L189.9 370.0zM194.9 361.6L194.9 355.8L189.9 358.7zM194.9 350.3L194.9 344.5L189.9 347.4zM194.9 339.0L194.9 333.2L189.9 336.1zM194.9 327.7L194.9 321.9L189.9 324.8zM194.9 316.4L194.9 310.6L189.9 313.5zM194.9 305.1L194.9 299.3L189.9 302.2zM194.9 293.8L194.9 288.0L189.9 290.9z" fill="#2e9e2e"/><path d="M311.5 601.4L312.9 607.0L307.4 605.4zM310.9 612.7L309.0 618.1L305.2 613.7zM307.4 623.3L306.0 628.9L301.8 624.9zM303.8 633.6L307.4 638.2L301.7 639.0zM310.3 642.3L315.9 644.0L311.7 647.9zM320.6 646.8L325.7 644.0L325.6 649.7zM330.5 641.3L335.6 638.5L335.4 644.3zM340.2 635.7L345.1 632.6L345.3 638.4zM350.2 630.7L352.3 625.3L355.9 629.9zM354.3 620.3L355.9 614.7L359.9 618.9zM357.5 608.5L362.7 605.9L362.3 611.7zM367.3 611.5L371.4 615.6L365.9 617.1zM377.1 615.2L382.8 616.5L378.8 620.7zM388.1 617.7L393.8 619.0L389.8 623.2zM398.9 621.3L404.4 623.4L399.9 627.0zM402.1 628.5L398.0 632.6L396.5 627.0zM395.4 636.2L395.4 642.0L390.4 639.1zM395.6 646.6L400.1 650.3L394.7 652.3zM403.7 654.2L409.3 655.6L405.3 659.7zM414.6 656.9L420.3 658.3L416.3 662.5zM425.5 657.5L431.3 657.1L428.7 662.3zM436.7 659.5L441.8 662.4L436.8 665.3zM446.6 665.1L451.6 667.9L446.6 670.8zM456.8 669.4L462.3 671.3L457.9 675.0zM466.8 670.1L472.3 668.2L471.3 673.8zM477.5 666.3L482.9 664.3L481.9 670.0zM488.1 662.4L493.5 660.4L492.5 666.1zM498.6 659.2L502.6 655.0L504.2 660.5zM505.9 651.4L506.4 645.6L511.1 648.9zM507.8 639.6L513.5 638.3L511.7 643.8zM518.8 637.1L524.5 635.9L522.7 641.4zM529.9 634.7L535.5 633.5L533.8 639.0zM540.9 632.3L546.6 631.1L544.8 636.6zM551.5 630.4L554.8 625.6L557.3 630.8zM558.1 621.2L561.7 616.6L563.9 622.0zM565.1 612.3L568.7 607.7L570.8 613.1zM572.1 603.4L575.7 598.8L577.8 604.2zM574.7 596.0L570.6 591.9L576.2 590.4zM566.7 588.0L562.6 583.9L568.2 582.4zM561.4 578.2L561.9 572.4L566.7 575.7zM564.5 567.2L568.1 562.7L570.2 568.0zM566.1 561.8L560.5 560.4L564.5 556.2zM555.0 559.1L549.6 557.2L554.0 553.4zM544.4 555.3L538.9 553.4L543.3 549.6zM534.0 552.0L528.3 552.3L530.8 547.2zM522.8 552.7L517.0 553.1L519.6 547.9zM511.2 553.8L505.5 552.5L509.5 548.3zM500.2 551.3L494.5 550.0L498.5 545.8zM488.9 548.8L483.8 546.2L488.6 543.0zM478.8 543.7L473.7 541.1L478.5 537.9zM468.7 538.4L464.1 534.8L469.5 532.7zM460.7 529.7L461.7 535.4L456.2 533.4zM464.9 538.5L469.8 541.6L464.6 544.2zM474.4 544.7L479.2 547.8L474.0 550.4zM483.8 550.8L488.7 554.0L483.5 556.6zM480.7 557.0L475.2 558.7L476.4 553.1zM469.3 558.2L463.5 558.1L466.5 553.1zM457.0 558.4L453.2 554.1L458.8 552.9zM449.8 549.9L445.2 546.4L450.5 544.2zM440.6 543.0L436.6 538.8L442.3 537.5zM434.2 533.5L428.4 533.8L431.1 528.6zM422.9 534.0L417.1 534.2L419.8 529.1zM411.8 533.3L407.3 536.9L406.4 531.2zM403.0 540.4L398.5 544.0L397.6 538.3zM394.9 548.1L390.8 552.2L389.3 546.6zM386.9 556.1L382.9 560.2L381.3 554.7zM375.4 558.3L370.1 556.1L374.7 552.6zM365.0 553.9L359.7 551.6L364.3 548.2zM358.5 558.4L355.2 563.2L352.7 558.0zM351.3 567.3L346.9 571.1L345.9 565.4zM342.7 574.6L338.2 578.3L337.2 572.6zM334.0 581.9L329.6 585.6L328.6 579.9zM325.4 589.1L320.9 592.9L319.9 587.2zM316.7 596.4L312.3 600.1L311.3 594.4z" fill="#2e9e2e"/><path d="M209.3 433.7 L214.4 441.4 L226.4 455.0 L235.0 457.7 L245.3 470.6 L257.3 474.9 L271.0 479.1 L291.6 481.7 L300.0 485.0 L301.9 493.7 L308.7 507.4 L313.9 517.7 L322.4 528.0 L335.6 542.3 L340.8 558.0M327.6 420.0 L325.9 430.3 L322.4 449.1 L322.4 459.4 L326.7 468.0 L320.7 480.0 L315.6 495.4 L315.6 509.1 L322.0 520.0M386.3 432.9 L389.7 441.4 L400.0 453.4 L405.1 462.0 L413.7 457.7 L417.1 446.6 L420.6 436.3 L419.7 429.4M786.0 424.0 L748.0 427.3 L720.6 435.5 L715.0 431.4 L707.0 439.6 L693.0 437.0 L657.7 438.3 L644.0 446.5 L633.0 463.0 L620.0 474.9 L607.1 486.9 L602.9 495.4 L603.7 505.7 L604.8 519.0 L615.8 537.3 L634.0 555.6 L637.7 562.9 L626.8 584.8 L610.3 599.5 L606.7 614.0 L610.3 628.7 L606.3 640.0 L594.6 649.4 L583.0 668.0 L576.0 686.8M576.0 686.8 L574.7 663.4 L566.5 660.0 L536.0 671.6 L491.5 676.3 L451.7 675.0 L443.9 669.0 L432.0 664.0 L418.0 659.0 L404.0 656.0 L393.8 647.0 L393.8 639.3 L401.4 629.8 L409.0 624.0 L405.3 620.2 L390.0 618.3 L370.9 612.6 L363.2 606.8 L355.6 612.6 L351.8 629.8 L323.1 646.0 L313.6 643.1 L306.0 635.5 L313.6 616.4 L313.6 606.8M576.0 686.8 L566.5 701.0 L551.2 708.0 L543.0 719.6 L544.3 729.0 L551.2 736.0 L564.0 738.4 L606.3 749.0 L613.3 773.5 L601.6 797.0 L609.8 808.7 L604.0 817.0 L580.5 813.4 L572.3 808.7 L566.5 789.0 L559.4 788.3 L531.4 800.7 L524.3 797.0 L530.2 780.6 L530.2 749.0 L521.0 744.2 L498.6 745.4 L482.2 757.0 L468.1 774.6 L474.0 783.0 L482.2 784.0 L489.2 797.0 L479.8 804.0 L463.4 814.5 L475.1 821.6 L490.3 845.0M199.0 596.3 L208.5 590.6 L231.5 592.5 L250.6 612.6 L281.1 623.0 L286.9 620.2 L283.0 597.3 L290.7 595.4 L306.0 599.2 L313.6 606.8M315.5 591.6 L317.4 576.3 L323.1 572.5M322.0 528.0 L330.0 534.0 L335.0 548.0 L340.0 560.0 L328.0 575.0 L320.0 590.0" fill="none" stroke="#3a86c6" stroke-width="1.1" stroke-linejoin="round"/><path d="M199.0 380.7 L207.0 380.7 L215.6 387.9 L219.7 381.7 L236.0 379.6 L256.7 382.7 L281.4 385.8 L300.0 390.9 L304.6 392.6 L303.4 396.0 L309.1 400.6 L314.9 399.4 L327.4 397.7 L336.6 398.9 L345.7 404.6 L353.7 410.9 L364.0 414.3 L368.6 418.9M367.4 402.0 L389.7 396.9 L398.3 397.7 L430.9 400.3 L436.0 405.4 L441.1 403.7 L460.0 403.7 L477.1 404.6 L487.4 408.9 L495.0 409.5 L511.7 416.7 L528.0 414.6 L555.0 411.5M389.7 396.9 L400.0 381.4 L396.6 376.3 L394.9 364.3 L381.1 363.4M398.3 397.7 L396.6 405.4 L400.0 412.3 L398.3 419.1 L391.4 426.0 L386.3 427.7M430.9 400.3 L436.0 415.7 L442.9 424.3 L446.3 432.9 L444.6 441.4 L442.9 450.0M436.0 405.4 L456.6 396.9 L458.3 386.6 L463.4 380.6M420.6 424.3 L427.4 407.1M420.6 424.3 L408.6 414.9M422.3 426.0 L418.9 432.9 L405.1 439.7 L401.7 443.1M422.3 426.0 L449.7 422.6 L470.3 419.1 L490.0 417.4 L500.0 420.0 L538.0 418.0M442.9 426.0 L430.9 439.7 L424.0 444.9 L442.9 448.3 L456.6 444.9 L470.3 453.4 L477.1 463.7M448.0 439.7 L454.3 442.7 L461.2 448.2 L469.4 457.8 L470.8 471.5 L463.9 489.4M442.0 487.3 L435.1 496.2 L437.8 505.8 L444.0 518.2 L457.0 532.0 L468.0 540.1 L487.2 552.5 L496.8 560.0M444.0 518.2 L437.8 521.0M457.0 533.3 L451.6 541.5 L454.3 548.4 L462.5 552.5M490.0 497.6 L495.4 483.9 L488.6 475.7 L490.0 467.4 L480.4 464.0 L473.5 467.4M470.8 471.5 L476.2 464.7 L479.0 459.2 L487.2 459.9M502.3 501.7 L507.8 489.4 L516.0 481.2 L516.0 455.1M501.0 504.5 L513.3 516.8 L526.0 517.0M322.9 412.6 L332.0 413.1 L336.6 417.7 L337.7 425.7 L338.9 437.1 L338.9 445.1 L343.4 452.0 L349.1 460.0 L353.7 465.7 L359.4 464.6 L368.6 457.7 L380.0 453.1 L389.1 450.9 L400.0 454.3 L420.0 452.0 L440.0 450.0M343.4 455.4 L336.6 461.1 L333.1 471.4 L332.0 480.0M343.4 455.4 L328.6 468.0 L322.9 472.6M377.7 437.1 L375.4 444.0 L374.3 453.1 L375.4 460.0 L376.6 466.9M368.6 418.9 L373.1 414.3 L375.4 415.4 L374.3 423.4 L369.7 432.6 L375.4 437.1 L380.0 434.9 L382.3 428.0 L380.0 420.0 L380.0 409.7 L374.3 404.0 L368.6 402.9 L380.0 400.6 L391.4 397.1 L398.3 389.1 L398.3 382.3M340.0 562.0 L350.0 544.0 L362.0 525.0 L375.0 508.0 L384.0 499.0M346.0 563.0 L356.0 545.0 L368.0 526.0 L380.0 510.0 L390.0 501.0M372.2 513.5 L378.4 508.4 L383.5 513.5 L393.8 506.3 L406.1 507.3 L409.2 516.6 L406.1 521.7 L397.9 520.7 L392.8 524.8 L393.8 534.1 L397.9 537.2 L396.9 543.4 L390.7 548.5 L383.5 552.6 L375.3 552.6 L369.1 548.5 L371.2 543.4 L374.2 538.2 L372.2 527.9 L371.2 520.7 L372.2 513.5M390.7 515.6 L402.0 521.7 L408.2 527.9 L416.4 529.0 L420.0 532.0 L430.0 540.0M345.4 565.0 L350.6 567.0 L354.7 575.2 L356.7 585.0M491.0 362.8 L503.5 367.3 L520.0 379.6 L542.5 387.9 L544.6 398.0 L538.0 403.3 L555.0 411.5M199.0 432.0 L212.7 437.1 L238.4 454.3 L248.7 456.0 L262.4 463.7 L284.7 470.6 L301.9 476.6 L310.4 481.7 L319.0 488.6 L329.3 493.7 L344.7 495.4 L365.0 496.0 L390.0 492.0 L420.0 490.0 L442.0 487.6 L470.0 492.9 L500.9 503.1 L538.6 513.4 L576.3 524.6 L600.3 527.1M199.0 562.3 L229.9 560.6 L255.6 553.7 L298.4 543.4 L303.6 538.3 L312.1 529.7 L329.3 528.0 L339.6 526.3 L349.0 529.7M334.4 420.0 L339.6 428.6 L341.3 445.7 L346.4 454.3 L349.0 459.4M332.7 469.7 L341.3 457.7 L349.0 454.3M250.6 654.6 L286.9 626.0 L313.6 595.4 L332.7 572.5 L349.9 559.0 L354.7 551.0 L375.5 520.0 L390.0 505.0 L405.0 492.0 L420.0 480.0 L440.0 470.0M286.9 626.0 L290.0 640.0 L294.5 648.9M576.3 524.6 L596.9 540.0M523.1 471.4 L526.6 483.4 L542.0 492.0 L554.0 498.9 L569.4 507.4 L579.7 512.6 L590.0 518.6 L600.3 528.0M579.7 512.6 L578.0 478.3M574.6 510.0 L590.0 488.6 L593.4 476.6 L581.4 461.1M542.0 459.4 L540.3 452.6 L550.6 447.4 L566.0 448.3 L583.1 452.6 L600.3 459.4 L603.7 468.0 L602.0 488.6 L590.0 505.7 L579.7 516.0M569.4 442.3 L571.1 449.1M588.3 447.4 L603.7 445.7M584.9 459.4 L603.7 452.6M579.7 482.6 L593.4 483.4 L602.0 486.9M470.0 459.4 L478.6 459.4 L487.1 468.0 L488.9 474.9 L495.7 485.1 L490.6 498.9M516.3 456.0 L515.4 476.6 L509.4 483.4 L519.7 490.3M516.3 480.0 L506.0 492.0 L504.3 502.3M500.9 504.0 L512.9 517.7 L526.6 518.6M536.9 547.7 L555.7 545.1 L569.4 536.6 L578.0 527.1M598.6 545.1 L600.3 555.4 L591.7 570.0 L575.7 601.6 L560.0 625.0 L546.6 640.5 L531.0 647.3 L515.5 652.0M588.3 546.9 L598.6 552.0M445.5 520.0 L459.1 533.6 L488.3 554.0 L503.8 562.7 L554.3 592.9 L566.0 621.0M503.8 562.7 L449.4 634.6 L430.0 638.5M503.8 562.7 L511.6 553.0 L534.9 552.1M503.8 562.7 L474.7 565.7 L461.1 566.6 L460.1 572.5M509.7 560.8 L521.3 559.8 L534.9 561.8 L542.7 570.5 L554.3 582.2 L556.3 589.9 L550.5 592.9 L544.6 595.8 L542.7 603.5 L534.9 611.3 L527.1 614.2 L515.5 612.3 L503.8 609.4 L492.2 606.5 L488.3 607.4 L486.3 624.9 L480.5 630.7 L482.5 636.6 L498.0 652.1M474.7 565.7 L468.9 578.3 L478.6 593.8 L480.5 597.7 L488.3 607.4M479.5 594.8 L498.0 580.2 L505.8 564.7M472.7 574.4 L455.3 580.2 L449.4 595.8 L443.6 611.3 L447.5 630.7 L453.3 634.6 L468.9 648.2 L498.0 652.1M445.5 630.7 L431.9 636.6 L430.0 644.3M430.0 553.0 L459.1 539.4M451.4 537.5 L453.3 549.1 L461.1 551.1M349.9 564.8 L355.6 578.2 L351.8 585.8 L346.1 612.6 L344.1 620.2 L348.0 624.0M355.6 584.0 L370.9 591.6 L370.9 599.2 L363.2 605.0 L367.0 608.8 L370.9 614.5 L390.0 617.0 L407.2 618.3 L413.0 624.0M321.2 648.9 L323.1 654.6 L330.8 655.5 L332.7 654.6 L344.1 647.0 L357.5 635.5 L359.4 622.1 L370.9 618.3 L390.0 620.2 L401.4 626.0M509.0 655.0 L520.0 650.0 L545.0 642.0" fill="none" stroke="#4a4a4a" stroke-width="3.4" stroke-linejoin="round" stroke-linecap="round"/><path d="M199.0 380.7 L207.0 380.7 L215.6 387.9 L219.7 381.7 L236.0 379.6 L256.7 382.7 L281.4 385.8 L300.0 390.9 L304.6 392.6 L303.4 396.0 L309.1 400.6 L314.9 399.4 L327.4 397.7 L336.6 398.9 L345.7 404.6 L353.7 410.9 L364.0 414.3 L368.6 418.9M367.4 402.0 L389.7 396.9 L398.3 397.7 L430.9 400.3 L436.0 405.4 L441.1 403.7 L460.0 403.7 L477.1 404.6 L487.4 408.9 L495.0 409.5 L511.7 416.7 L528.0 414.6 L555.0 411.5M389.7 396.9 L400.0 381.4 L396.6 376.3 L394.9 364.3 L381.1 363.4M398.3 397.7 L396.6 405.4 L400.0 412.3 L398.3 419.1 L391.4 426.0 L386.3 427.7M430.9 400.3 L436.0 415.7 L442.9 424.3 L446.3 432.9 L444.6 441.4 L442.9 450.0M436.0 405.4 L456.6 396.9 L458.3 386.6 L463.4 380.6M420.6 424.3 L427.4 407.1M420.6 424.3 L408.6 414.9M422.3 426.0 L418.9 432.9 L405.1 439.7 L401.7 443.1M422.3 426.0 L449.7 422.6 L470.3 419.1 L490.0 417.4 L500.0 420.0 L538.0 418.0M442.9 426.0 L430.9 439.7 L424.0 444.9 L442.9 448.3 L456.6 444.9 L470.3 453.4 L477.1 463.7M448.0 439.7 L454.3 442.7 L461.2 448.2 L469.4 457.8 L470.8 471.5 L463.9 489.4M442.0 487.3 L435.1 496.2 L437.8 505.8 L444.0 518.2 L457.0 532.0 L468.0 540.1 L487.2 552.5 L496.8 560.0M444.0 518.2 L437.8 521.0M457.0 533.3 L451.6 541.5 L454.3 548.4 L462.5 552.5M490.0 497.6 L495.4 483.9 L488.6 475.7 L490.0 467.4 L480.4 464.0 L473.5 467.4M470.8 471.5 L476.2 464.7 L479.0 459.2 L487.2 459.9M502.3 501.7 L507.8 489.4 L516.0 481.2 L516.0 455.1M501.0 504.5 L513.3 516.8 L526.0 517.0M322.9 412.6 L332.0 413.1 L336.6 417.7 L337.7 425.7 L338.9 437.1 L338.9 445.1 L343.4 452.0 L349.1 460.0 L353.7 465.7 L359.4 464.6 L368.6 457.7 L380.0 453.1 L389.1 450.9 L400.0 454.3 L420.0 452.0 L440.0 450.0M343.4 455.4 L336.6 461.1 L333.1 471.4 L332.0 480.0M343.4 455.4 L328.6 468.0 L322.9 472.6M377.7 437.1 L375.4 444.0 L374.3 453.1 L375.4 460.0 L376.6 466.9M368.6 418.9 L373.1 414.3 L375.4 415.4 L374.3 423.4 L369.7 432.6 L375.4 437.1 L380.0 434.9 L382.3 428.0 L380.0 420.0 L380.0 409.7 L374.3 404.0 L368.6 402.9 L380.0 400.6 L391.4 397.1 L398.3 389.1 L398.3 382.3M340.0 562.0 L350.0 544.0 L362.0 525.0 L375.0 508.0 L384.0 499.0M346.0 563.0 L356.0 545.0 L368.0 526.0 L380.0 510.0 L390.0 501.0M372.2 513.5 L378.4 508.4 L383.5 513.5 L393.8 506.3 L406.1 507.3 L409.2 516.6 L406.1 521.7 L397.9 520.7 L392.8 524.8 L393.8 534.1 L397.9 537.2 L396.9 543.4 L390.7 548.5 L383.5 552.6 L375.3 552.6 L369.1 548.5 L371.2 543.4 L374.2 538.2 L372.2 527.9 L371.2 520.7 L372.2 513.5M390.7 515.6 L402.0 521.7 L408.2 527.9 L416.4 529.0 L420.0 532.0 L430.0 540.0M345.4 565.0 L350.6 567.0 L354.7 575.2 L356.7 585.0M491.0 362.8 L503.5 367.3 L520.0 379.6 L542.5 387.9 L544.6 398.0 L538.0 403.3 L555.0 411.5M199.0 432.0 L212.7 437.1 L238.4 454.3 L248.7 456.0 L262.4 463.7 L284.7 470.6 L301.9 476.6 L310.4 481.7 L319.0 488.6 L329.3 493.7 L344.7 495.4 L365.0 496.0 L390.0 492.0 L420.0 490.0 L442.0 487.6 L470.0 492.9 L500.9 503.1 L538.6 513.4 L576.3 524.6 L600.3 527.1M199.0 562.3 L229.9 560.6 L255.6 553.7 L298.4 543.4 L303.6 538.3 L312.1 529.7 L329.3 528.0 L339.6 526.3 L349.0 529.7M334.4 420.0 L339.6 428.6 L341.3 445.7 L346.4 454.3 L349.0 459.4M332.7 469.7 L341.3 457.7 L349.0 454.3M250.6 654.6 L286.9 626.0 L313.6 595.4 L332.7 572.5 L349.9 559.0 L354.7 551.0 L375.5 520.0 L390.0 505.0 L405.0 492.0 L420.0 480.0 L440.0 470.0M286.9 626.0 L290.0 640.0 L294.5 648.9M576.3 524.6 L596.9 540.0M523.1 471.4 L526.6 483.4 L542.0 492.0 L554.0 498.9 L569.4 507.4 L579.7 512.6 L590.0 518.6 L600.3 528.0M579.7 512.6 L578.0 478.3M574.6 510.0 L590.0 488.6 L593.4 476.6 L581.4 461.1M542.0 459.4 L540.3 452.6 L550.6 447.4 L566.0 448.3 L583.1 452.6 L600.3 459.4 L603.7 468.0 L602.0 488.6 L590.0 505.7 L579.7 516.0M569.4 442.3 L571.1 449.1M588.3 447.4 L603.7 445.7M584.9 459.4 L603.7 452.6M579.7 482.6 L593.4 483.4 L602.0 486.9M470.0 459.4 L478.6 459.4 L487.1 468.0 L488.9 474.9 L495.7 485.1 L490.6 498.9M516.3 456.0 L515.4 476.6 L509.4 483.4 L519.7 490.3M516.3 480.0 L506.0 492.0 L504.3 502.3M500.9 504.0 L512.9 517.7 L526.6 518.6M536.9 547.7 L555.7 545.1 L569.4 536.6 L578.0 527.1M598.6 545.1 L600.3 555.4 L591.7 570.0 L575.7 601.6 L560.0 625.0 L546.6 640.5 L531.0 647.3 L515.5 652.0M588.3 546.9 L598.6 552.0M445.5 520.0 L459.1 533.6 L488.3 554.0 L503.8 562.7 L554.3 592.9 L566.0 621.0M503.8 562.7 L449.4 634.6 L430.0 638.5M503.8 562.7 L511.6 553.0 L534.9 552.1M503.8 562.7 L474.7 565.7 L461.1 566.6 L460.1 572.5M509.7 560.8 L521.3 559.8 L534.9 561.8 L542.7 570.5 L554.3 582.2 L556.3 589.9 L550.5 592.9 L544.6 595.8 L542.7 603.5 L534.9 611.3 L527.1 614.2 L515.5 612.3 L503.8 609.4 L492.2 606.5 L488.3 607.4 L486.3 624.9 L480.5 630.7 L482.5 636.6 L498.0 652.1M474.7 565.7 L468.9 578.3 L478.6 593.8 L480.5 597.7 L488.3 607.4M479.5 594.8 L498.0 580.2 L505.8 564.7M472.7 574.4 L455.3 580.2 L449.4 595.8 L443.6 611.3 L447.5 630.7 L453.3 634.6 L468.9 648.2 L498.0 652.1M445.5 630.7 L431.9 636.6 L430.0 644.3M430.0 553.0 L459.1 539.4M451.4 537.5 L453.3 549.1 L461.1 551.1M349.9 564.8 L355.6 578.2 L351.8 585.8 L346.1 612.6 L344.1 620.2 L348.0 624.0M355.6 584.0 L370.9 591.6 L370.9 599.2 L363.2 605.0 L367.0 608.8 L370.9 614.5 L390.0 617.0 L407.2 618.3 L413.0 624.0M321.2 648.9 L323.1 654.6 L330.8 655.5 L332.7 654.6 L344.1 647.0 L357.5 635.5 L359.4 622.1 L370.9 618.3 L390.0 620.2 L401.4 626.0M509.0 655.0 L520.0 650.0 L545.0 642.0" fill="none" stroke="#fff" stroke-width="1.9" stroke-linejoin="round" stroke-linecap="round"/><path d="M343.2 415.1h8.4l-4.2 6.6zM339.6 425.1h8.4l-4.2 6.6zM364.2 426.1h8.4l-4.2 6.6zM331.3 434.3h8.4l-4.2 6.6zM358.8 436.1h8.4l-4.2 6.6zM333.2 441.6h8.4l-4.2 6.6zM354.2 445.2h8.4l-4.2 6.6zM391.7 435.2h8.4l-4.2 6.6zM367.0 459.8h8.4l-4.2 6.6zM375.2 455.3h8.4l-4.2 6.6zM451.1 440.7h8.4l-4.2 6.6zM452.0 447.1h8.4l-4.2 6.6zM455.7 480.0h8.4l-4.2 6.6zM423.7 452.6h8.4l-4.2 6.6zM494.8 437.3h8.4l-4.2 6.6zM556.5 440.0h8.4l-4.2 6.6zM570.1 457.0h8.4l-4.2 6.6zM592.0 451.5h8.4l-4.2 6.6zM543.6 474.2h8.4l-4.2 6.6zM546.3 482.1h8.4l-4.2 6.6zM511.3 474.8h8.4l-4.2 6.6zM507.2 484.3h8.4l-4.2 6.6zM547.4 493.8h8.4l-4.2 6.6zM617.4 506.2h8.4l-4.2 6.6zM626.8 500.2h8.4l-4.2 6.6zM646.8 519.3h8.4l-4.2 6.6zM571.5 511.6h8.4l-4.2 6.6zM586.5 528.8h8.4l-4.2 6.6zM574.8 536.3h8.4l-4.2 6.6zM697.3 556.8h8.4l-4.2 6.6zM747.8 428.2h8.4l-4.2 6.6zM756.1 428.2h8.4l-4.2 6.6zM340.1 425.4h8.4l-4.2 6.6z" fill="#1f6fb0" stroke="#102030" stroke-width="0.9" stroke-linejoin="round"/><circle cx="380.9" cy="481.5" r="4.9" fill="#e31a1c"/><circle cx="388.8" cy="511.8" r="4.9" fill="#e31a1c"/><circle cx="351.2" cy="580.6" r="4.9" fill="#e31a1c"/><circle cx="415.2" cy="624.5" r="4.9" fill="#e31a1c"/><circle cx="597.5" cy="541.5" r="4.9" fill="#e31a1c"/><g font-family="Liberation Sans" font-size="12.6" fill="none" stroke="#fff" stroke-width="2.6" stroke-linejoin="round"><text x="385.8" y="474" text-anchor="start">Swellendam</text><text x="393.7" y="504.2" text-anchor="start">Railton</text><text x="602" y="535" text-anchor="start">Buffeljagsrivier</text><text x="328.4" y="491.6" text-anchor="middle">Bontebok</text><text x="328.4" y="507.5" text-anchor="middle">National</text><text x="328.4" y="523" text-anchor="middle">Park</text><text x="328.4" y="539.5" text-anchor="middle">Reception</text><text x="328.4" y="556" text-anchor="middle">&amp;</text><text x="328.4" y="571.5" text-anchor="middle">Shop</text><text x="419.8" y="553.2" text-anchor="start">Lang</text><text x="419.8" y="568.7" text-anchor="start">Elsies</text><text x="419.8" y="584.3" text-anchor="start">Kraal</text><text x="419.8" y="600.2" text-anchor="start">Rest</text><text x="419.8" y="616.3" text-anchor="start">Camp</text></g><g font-family="Liberation Sans" font-size="12.6" fill="#000"><text x="385.8" y="474" text-anchor="start">Swellendam</text><text x="393.7" y="504.2" text-anchor="start">Railton</text><text x="602" y="535" text-anchor="start">Buffeljagsrivier</text><text x="328.4" y="491.6" text-anchor="middle">Bontebok</text><text x="328.4" y="507.5" text-anchor="middle">National</text><text x="328.4" y="523" text-anchor="middle">Park</text><text x="328.4" y="539.5" text-anchor="middle">Reception</text><text x="328.4" y="556" text-anchor="middle">&amp;</text><text x="328.4" y="571.5" text-anchor="middle">Shop</text><text x="419.8" y="553.2" text-anchor="start">Lang</text><text x="419.8" y="568.7" text-anchor="start">Elsies</text><text x="419.8" y="584.3" text-anchor="start">Kraal</text><text x="419.8" y="600.2" text-anchor="start">Rest</text><text x="419.8" y="616.3" text-anchor="start">Camp</text></g></svg><div style="position:absolute;left:791px;top:472px;width:1px;height:1px;background:#9a9a9a"></div><div style="position:absolute;left:194px;top:472px;width:1px;height:1px;background:#9a9a9a"></div><div style="position:absolute;left:791px;top:475px;width:1px;height:1px;background:#9a9a9a"></div><div style="position:absolute;left:194px;top:475px;width:1px;height:1px;background:#9a9a9a"></div><div style="position:absolute;left:791px;top:478px;width:1px;height:1px;background:#9a9a9a"></div><div style="position:absolute;left:194px;top:478px;width:1px;height:1px;background:#9a9a9a"></div><div style="position:absolute;left:791px;top:481px;width:1px;height:1px;background:#9a9a9a"></div><div style="position:absolute;left:194px;top:481px;width:1px;height:1px;background:#9a9a9a"></div><div style="position:absolute;left:791px;top:484px;width:1px;height:1px;background:#9a9a9a"></div><div style="position:absolute;left:194px;top:484px;width:1px;height:1px;background:#9a9a9a"></div><div style="position:absolute;left:791px;top:487px;width:1px;height:1px;background:#9a9a9a"></div><div style="position:absolute;left:194px;top:487px;width:1px;height:1px;background:#9a9a9a"></div><div style="position:absolute;left:791px;top:490px;width:1px;height:1px;background:#9a9a9a"></div><div style="position:absolute;left:194px;top:490px;width:1px;height:1px;background:#9a9a9a"></div><div class="t" style="left:798px;top:116.84px;font-size:12px;color:#000;font-weight:normal;font-style:normal;letter-spacing:-0.3px;">Layer Styling</div><svg class="a" style="left:1125px;top:117px" width="24" height="12" viewBox="0 0 24 12">
<rect x="0.5" y="0.5" width="10" height="10" rx="2" fill="none" stroke="#666"/>
<rect x="4" y="2.5" width="4.5" height="4.5" fill="none" stroke="#666"/><rect x="2.5" y="4" width="4.5" height="4.5" fill="#f0f0f0" stroke="#666"/>
<rect x="12.5" y="0.5" width="10" height="10" rx="2" fill="none" stroke="#666"/>
<path d="M15 3l5 5M20 3l-5 5" stroke="#555" stroke-width="1.8"/></svg><div class="a" style="left:797px;top:136px;width:351px;height:23px;background:linear-gradient(#fdfdfd,#ececec);border:1px solid #adadad;border-radius:3px"></div><div class="t" style="left:822px;top:142.49px;font-size:11px;color:#000;font-weight:normal;font-style:normal;letter-spacing:-0.15px;">places</div><svg class="a" style="left:1131px;top:144px" width="10" height="6"><path d="M1 1h8L5 5z" fill="#444"/></svg><svg class="a" style="left:804px;top:140px" width="14" height="14"><circle cx="3" cy="10" r="1.5" fill="none" stroke="#888" stroke-width="0.8"/><circle cx="5" cy="4" r="1.5" fill="none" stroke="#888" stroke-width="0.8"/><circle cx="12" cy="2.5" r="1.5" fill="none" stroke="#888" stroke-width="0.8"/></svg><div style="position:absolute;left:797px;top:165px;width:38px;height:678px;background:#5b5b5b"></div><div style="position:absolute;left:797px;top:189px;width:38px;height:24px;background:#f0f0f0"></div><svg class="a" style="left:799px;top:168px" width="18" height="18" viewBox="0 0 18 18"><path d="M2 12l6-5 4 4-5 5z" fill="#e84a3a"/><path d="M3 9l5-5 5 4-5 5z" fill="#f2d23a"/><path d="M4 11l4-4 4 4-4 4z" fill="#4a86d4" opacity="0.8"/><path d="M9 12l8-9" stroke="#c9a227" stroke-width="2"/><path d="M7 10l5 5-3 2-4-4z" fill="#d9a66a"/></svg><svg class="a" style="left:799px;top:192px" width="18" height="18" viewBox="0 0 18 18"><path d="M2 9l3-4h11v8H5z" fill="#c8e0a8" stroke="#6a9a4a" stroke-width="0.8"/><text x="6" y="11.5" font-size="6" fill="#333" font-family="Liberation Sans">abc</text></svg><svg class="a" style="left:799px;top:215px" width="18" height="18" viewBox="0 0 18 18"><ellipse cx="9" cy="9" rx="8" ry="5" fill="#fff" stroke="#333" stroke-width="0.8"/><text x="3" y="11.5" font-size="7" font-weight="bold" fill="#333" font-family="Liberation Sans">abc</text></svg><svg class="a" style="left:799px;top:240px" width="18" height="18" viewBox="0 0 18 18"><path d="M9 2l7 4-7 4-7-4z" fill="#e84a3a"/><path d="M2 6l7 4v8l-7-4z" fill="#4caf50"/><path d="M16 6l-7 4v8l7-4z" fill="#f2d23a"/></svg><svg class="a" style="left:799px;top:264px" width="18" height="18" viewBox="0 0 18 18"><rect x="6" y="1" width="6" height="6" fill="#e84a3a"/><rect x="1" y="11" width="6" height="6" fill="#f2d23a"/><rect x="11" y="11" width="6" height="6" fill="#4a86d4"/><path d="M9 7v2M4 11V9h10v2" stroke="#d88a3a" fill="none" stroke-width="1.5"/></svg><svg class="a" style="left:799px;top:288px" width="18" height="18" viewBox="0 0 18 18"><path d="M3 7a5 5 0 0 1 9-2" stroke="#4caf50" stroke-width="2.5" fill="none"/><path d="M15 11a5 5 0 0 1-9 2" stroke="#f08a24" stroke-width="2.5" fill="none"/></svg><div class="a" style="left:838px;top:166px;width:280px;height:23px;background:linear-gradient(#fdfdfd,#ececec);border:1px solid #adadad;border-radius:3px"></div><div class="t" style="left:862px;top:172.49px;font-size:11px;color:#000;font-weight:normal;font-style:normal;letter-spacing:-0.15px;">Single Labels</div><svg class="a" style="left:1101px;top:174px" width="10" height="6"><path d="M1 1h8L5 5z" fill="#444"/></svg><svg class="a" style="left:844px;top:171px" width="16" height="12" viewBox="0 0 16 12"><path d="M1 6l3-5h11v10H4z" fill="#f2d23a" stroke="#a88a10" stroke-width="0.8"/><text x="5" y="8.5" font-size="5.5" fill="#333" font-family="Liberation Sans">abc</text></svg><div style="position:absolute;left:1125px;top:166px;width:23px;height:23px;background:linear-gradient(#fdfdfd,#ececec);border:1px solid #adadad;border-radius:3px"></div><svg class="a" style="left:1127px;top:168px" width="19" height="19" viewBox="0 0 19 19"><rect x="2" y="2" width="7" height="7" fill="#5b87c2" transform="rotate(45 5.5 5.5)"/><circle cx="12" cy="12" r="5" fill="#f2d23a" stroke="#d8a800" stroke-width="2" stroke-dasharray="2 1.4"/><circle cx="12" cy="12" r="1.8" fill="#fff"/></svg><div class="t" style="left:838px;top:202.69px;font-size:11px;color:#000;font-weight:normal;font-style:normal;letter-spacing:-0.15px;">Value</div><div class="a" style="left:870px;top:196px;width:248px;height:23px;background:#fff;border:1px solid #adadad;border-radius:3px"></div><div style="position:absolute;left:1098px;top:197px;width:1px;height:21px;background:#d0d0d0"></div><div style="position:absolute;left:1099px;top:197px;width:18px;height:21px;background:linear-gradient(#fdfdfd,#ececec);border-radius:0 3px 3px 0"></div><svg class="a" style="left:1101px;top:204px" width="10" height="6"><path d="M1 1h8L5 5z" fill="#444"/></svg><div class="t" style="left:874.5px;top:202.38px;font-size:9px;color:#555;font-weight:bold;font-style:normal;letter-spacing:0.2px">abc</div><div class="t" style="left:894px;top:202.69px;font-size:11px;color:#000;font-weight:normal;font-style:normal;letter-spacing:-0.15px;">name</div><div style="position:absolute;left:1125px;top:196px;width:23px;height:23px;background:linear-gradient(#fdfdfd,#ececec);border:1px solid #adadad;border-radius:3px"></div><div class="t" style="left:1130px;top:199.76px;font-size:18px;color:#6a2a7a;font-weight:normal;font-style:normal;font-family:"Liberation Serif",serif;letter-spacing:-0.15px;">&#949;</div><div style="position:absolute;left:837px;top:256px;width:281px;height:1px;background:#c9c9c9"></div><svg class="a" style="left:837px;top:228px" width="10" height="28"><path d="M0.5 0.5h9v27h-9l3-7-3-6 3-7z" fill="#e6e6e6" stroke="#bbb"/></svg><div style="position:absolute;left:894px;top:227px;width:48px;height:29px;background:linear-gradient(#ececec,#e2e2e2);border:1px solid #c4c4c4;border-bottom:none;border-radius:2px 2px 0 0"></div><div style="position:absolute;left:942px;top:227px;width:48px;height:29px;background:linear-gradient(#ececec,#e2e2e2);border:1px solid #c4c4c4;border-bottom:none;border-radius:2px 2px 0 0"></div><div style="position:absolute;left:990px;top:227px;width:48px;height:29px;background:linear-gradient(#ececec,#e2e2e2);border:1px solid #c4c4c4;border-bottom:none;border-radius:2px 2px 0 0"></div><div style="position:absolute;left:1038px;top:227px;width:48px;height:29px;background:linear-gradient(#ececec,#e2e2e2);border:1px solid #c4c4c4;border-bottom:none;border-radius:2px 2px 0 0"></div><div style="position:absolute;left:1086px;top:227px;width:32px;height:29px;background:linear-gradient(#ececec,#e2e2e2);border:1px solid #c4c4c4;border-bottom:none;border-radius:2px 2px 0 0"></div><div style="position:absolute;left:846px;top:226px;width:49px;height:31px;background:linear-gradient(#fafafa,#fff);border:1px solid #c4c4c4;border-bottom:none;border-radius:2px 2px 0 0"></div><div class="t" style="left:858.5px;top:230.69px;font-size:11px;color:#777;font-weight:normal;font-style:normal;letter-spacing:0">+</div><div class="t" style="left:866.5px;top:231.46px;font-size:9.5px;color:#333;font-weight:bold;font-style:normal;letter-spacing:0">ab</div><div class="t" style="left:858.5px;top:239.69px;font-size:11px;color:#777;font-weight:normal;font-style:normal;letter-spacing:0">&lt;</div><div class="t" style="left:871px;top:239.96px;font-size:9.5px;color:#333;font-weight:bold;font-style:normal;letter-spacing:0">c</div><svg class="a" style="left:904px;top:233px" width="26" height="16"><ellipse cx="13" cy="8" rx="11" ry="6.5" fill="#8fb0ee"/></svg><div class="t" style="left:907.5px;top:236.03px;font-size:10px;color:#3c3c3c;font-weight:bold;font-style:normal;letter-spacing:0">abc</div><svg class="a" style="left:952px;top:233px" width="26" height="16"><ellipse cx="13" cy="8" rx="11" ry="6.5" fill="#eef2f8" stroke="#bbb"/></svg><div class="t" style="left:955.5px;top:236.03px;font-size:10px;color:#3c3c3c;font-weight:bold;font-style:normal;letter-spacing:0">abc</div><svg class="a" style="left:1002px;top:231px" width="20" height="20" viewBox="0 0 20 20"><path d="M1.5 4c2 1 4 1 5 0s3-1 3.5 0 2.5 1 3.5 0 3-1 5 0c1 3 1 6 0 8.5-1.5 4-5 6-8.5 6S3 16.5 1.5 12.5c-1-2.5-1-5.5 0-8.5z" fill="#1f5fb0" stroke="#18325a" stroke-width="0.8"/><path d="M1.5 4c2 1 4 1 5 0s3-1 3.5 0 2.5 1 3.5 0 3-1 5 0l.3 3H1.2z" fill="#e0202a"/></svg><svg class="a" style="left:1050px;top:231px" width="22" height="22" viewBox="0 0 22 22"><path d="M3.5 5c2 1 4 1 5 0s3-1 3.5 0 2.5 1 3.5 0 3-1 4 0c1 3 1 6 0 8.5-1.5 4-5 6-8 6S4.5 17.5 3.5 13.5c-1-2.5-1-5.5 0-8.5z" fill="#333"/><path d="M1.5 3c2 1 4 1 5 0s3-1 3.5 0 2.5 1 3.5 0 3-1 4 0c1 3 1 6 0 8.5-1.5 4-5 6-8 6S2.5 15.5 1.5 11.5c-1-2.5-1-5.5 0-8.5z" fill="#e8ecfc" stroke="#8ea2f0" stroke-width="0.8"/></svg><div class="t" style="left:1099.5px;top:230.46px;font-size:9.5px;color:#3a3a3a;font-weight:bold;font-style:normal;letter-spacing:0">abc</div><svg class="a" style="left:1098px;top:238px" width="14" height="14"><path d="M3 12l7.5-10" stroke="#222" stroke-width="1.5"/></svg><div style="position:absolute;left:1118px;top:226px;width:15px;height:31px;background:linear-gradient(#fdfdfd,#ececec);border:1px solid #b5b5b5;border-radius:3px"></div><div style="position:absolute;left:1132px;top:226px;width:16px;height:31px;background:linear-gradient(#fdfdfd,#ececec);border:1px solid #b5b5b5;border-radius:3px"></div><svg class="a" style="left:1122px;top:236px" width="6" height="10"><path d="M5 1L1 5l4 4z" fill="#444"/></svg><svg class="a" style="left:1137px;top:236px" width="6" height="10"><path d="M1 1l4 4-4 4z" fill="#444"/></svg><div class="t" style="left:838px;top:268.69px;font-size:11px;color:#000;font-weight:normal;font-style:normal;letter-spacing:-0.15px;">Formatting</div><div class="t" style="left:838px;top:303.69px;font-size:11px;color:#000;font-weight:normal;font-style:normal;letter-spacing:-0.15px;">Type case</div><div class="a" style="left:921px;top:298px;width:185px;height:21px;background:linear-gradient(#fdfdfd,#ececec);border:1px solid #adadad;border-radius:3px"></div><div class="t" style="left:925px;top:303.49px;font-size:11px;color:#000;font-weight:normal;font-style:normal;letter-spacing:-0.15px;">No change</div><svg class="a" style="left:1089px;top:305px" width="10" height="6"><path d="M1 1h8L5 5z" fill="#444"/></svg><svg class="a" style="left:1114px;top:298px" width="25" height="20" viewBox="0 0 25 20"><path d="M1 9.4L6.5 3.6V15.2z" fill="#8a8a8a"/><rect x="6.7" y="2.7" width="11.6" height="14.5" fill="#fff" stroke="#6e6e6a" stroke-width="1"/><path d="M6.7 9.6h11.6" stroke="#6e6e6a" stroke-width="1"/><path d="M9 6h7.2" stroke="#3c3c3c" stroke-width="1.6" stroke-linecap="round"/><path d="M9 13.4h6.4" stroke="#3c3c3c" stroke-width="1.1"/><path d="M18.2 13.2h5.6L21 16.8z" fill="#3c3c3c"/></svg><div class="t" style="left:838px;top:335.69px;font-size:11px;color:#000;font-weight:normal;font-style:normal;letter-spacing:-0.15px;">Spacing</div><div class="t" style="left:921px;top:335.69px;font-size:11px;color:#000;font-weight:normal;font-style:normal;letter-spacing:-0.15px;">letter</div><div class="a" style="left:953px;top:331px;width:153px;height:20px;background:#fff;border:1px solid #adadad;border-radius:3px"></div><div style="position:absolute;left:1091px;top:332px;width:1px;height:18px;background:#adadad"></div><svg class="a" style="left:1094px;top:334px" width="9" height="14"><path d="M1 6L4.5 2 8 6z M1 8L4.5 12 8 8z" fill="#555"/></svg><div class="t" style="left:957px;top:335.99px;font-size:11px;color:#000;font-weight:normal;font-style:normal;letter-spacing:-0.15px;">0.0000</div><svg class="a" style="left:1114px;top:331px" width="25" height="20" viewBox="0 0 25 20"><path d="M1 9.4L6.5 3.6V15.2z" fill="#8a8a8a"/><rect x="6.7" y="2.7" width="11.6" height="14.5" fill="#fff" stroke="#6e6e6a" stroke-width="1"/><path d="M6.7 9.6h11.6" stroke="#6e6e6a" stroke-width="1"/><path d="M9 6h7.2" stroke="#3c3c3c" stroke-width="1.6" stroke-linecap="round"/><path d="M9 13.4h6.4" stroke="#3c3c3c" stroke-width="1.1"/><path d="M18.2 13.2h5.6L21 16.8z" fill="#3c3c3c"/></svg><div class="t" style="left:921px;top:367.69px;font-size:11px;color:#000;font-weight:normal;font-style:normal;letter-spacing:-0.15px;">word</div><div class="a" style="left:951px;top:363px;width:155px;height:20px;background:#fff;border:1px solid #adadad;border-radius:3px"></div><div style="position:absolute;left:1091px;top:364px;width:1px;height:18px;background:#adadad"></div><svg class="a" style="left:1094px;top:366px" width="9" height="14"><path d="M1 6L4.5 2 8 6z M1 8L4.5 12 8 8z" fill="#555"/></svg><div class="t" style="left:955px;top:367.99px;font-size:11px;color:#000;font-weight:normal;font-style:normal;letter-spacing:-0.15px;">0.0000</div><svg class="a" style="left:1114px;top:363px" width="25" height="20" viewBox="0 0 25 20"><path d="M1 9.4L6.5 3.6V15.2z" fill="#8a8a8a"/><rect x="6.7" y="2.7" width="11.6" height="14.5" fill="#fff" stroke="#6e6e6a" stroke-width="1"/><path d="M6.7 9.6h11.6" stroke="#6e6e6a" stroke-width="1"/><path d="M9 6h7.2" stroke="#3c3c3c" stroke-width="1.6" stroke-linecap="round"/><path d="M9 13.4h6.4" stroke="#3c3c3c" stroke-width="1.1"/><path d="M18.2 13.2h5.6L21 16.8z" fill="#3c3c3c"/></svg><div class="a" style="left:838px;top:394px;width:14px;height:14px;background:#fff;border:1px solid #6e6e6e"></div><svg class="a" style="left:838px;top:394px" width="14" height="14" viewBox="0 0 13 13"><path d="M2.8 6.6L5.2 10.2 10.2 2.2" fill="none" stroke="#000" stroke-width="1.7"/></svg><div class="t" style="left:857px;top:395.69px;font-size:11px;color:#000;font-weight:normal;font-style:normal;letter-spacing:-0.15px;">Enable kerning</div><div class="t" style="left:838px;top:424.69px;font-size:11px;color:#000;font-weight:normal;font-style:normal;letter-spacing:-0.15px;">Text orientation</div><div class="a" style="left:921px;top:419px;width:185px;height:21px;background:linear-gradient(#fdfdfd,#ececec);border:1px solid #adadad;border-radius:3px"></div><div class="t" style="left:925px;top:424.49px;font-size:11px;color:#000;font-weight:normal;font-style:normal;letter-spacing:-0.15px;">Horizontal</div><svg class="a" style="left:1089px;top:426px" width="10" height="6"><path d="M1 1h8L5 5z" fill="#444"/></svg><svg class="a" style="left:1114px;top:420px" width="25" height="20" viewBox="0 0 25 20"><path d="M1 9.4L6.5 3.6V15.2z" fill="#8a8a8a"/><rect x="6.7" y="2.7" width="11.6" height="14.5" fill="#fff" stroke="#6e6e6a" stroke-width="1"/><path d="M6.7 9.6h11.6" stroke="#6e6e6a" stroke-width="1"/><path d="M9 6h7.2" stroke="#3c3c3c" stroke-width="1.6" stroke-linecap="round"/><path d="M9 13.4h6.4" stroke="#3c3c3c" stroke-width="1.1"/><path d="M18.2 13.2h5.6L21 16.8z" fill="#3c3c3c"/></svg><div class="t" style="left:838px;top:456.69px;font-size:11px;color:#000;font-weight:normal;font-style:normal;letter-spacing:-0.15px;">Blend mode</div><div class="a" style="left:921px;top:451px;width:185px;height:21px;background:linear-gradient(#fdfdfd,#ececec);border:1px solid #adadad;border-radius:3px"></div><div class="t" style="left:925px;top:456.49px;font-size:11px;color:#000;font-weight:normal;font-style:normal;letter-spacing:-0.15px;">Normal</div><svg class="a" style="left:1089px;top:458px" width="10" height="6"><path d="M1 1h8L5 5z" fill="#444"/></svg><svg class="a" style="left:1114px;top:452px" width="25" height="20" viewBox="0 0 25 20"><path d="M1 9.4L6.5 3.6V15.2z" fill="#8a8a8a"/><rect x="6.7" y="2.7" width="11.6" height="14.5" fill="#fff" stroke="#6e6e6a" stroke-width="1"/><path d="M6.7 9.6h11.6" stroke="#6e6e6a" stroke-width="1"/><path d="M9 6h7.2" stroke="#3c3c3c" stroke-width="1.6" stroke-linecap="round"/><path d="M9 13.4h6.4" stroke="#3c3c3c" stroke-width="1.1"/><path d="M18.2 13.2h5.6L21 16.8z" fill="#3c3c3c"/></svg><div class="a" style="left:838px;top:483px;width:14px;height:14px;background:#fff;border:1px solid #6e6e6e"></div><div class="t" style="left:857px;top:484.69px;font-size:11px;color:#000;font-weight:normal;font-style:normal;letter-spacing:-0.15px;">Apply label text substitutes</div><div style="position:absolute;left:1112px;top:481px;width:23px;height:19px;background:linear-gradient(#fdfdfd,#ececec);border:1px solid #c4c4c4;border-radius:3px"></div><div class="t" style="left:1118px;top:485.54px;font-size:10px;color:#666;font-weight:normal;font-style:normal;letter-spacing:-0.15px;">...</div><div class="t" style="left:838px;top:507.69px;font-size:11px;color:#000;font-weight:normal;font-style:normal;letter-spacing:-0.15px;">Multiple lines</div><div class="t" style="left:858px;top:534.69px;font-size:11px;color:#000;font-weight:normal;font-style:normal;letter-spacing:-0.15px;">Wrap on character</div><div class="a" style="left:954px;top:528px;width:152px;height:21px;background:#fff;border:1px solid #adadad;border-radius:3px"></div><svg class="a" style="left:1114px;top:529px" width="25" height="20" viewBox="0 0 25 20"><path d="M1 9.4L6.5 3.6V15.2z" fill="#8a8a8a"/><rect x="6.7" y="2.7" width="11.6" height="14.5" fill="#fff" stroke="#6e6e6a" stroke-width="1"/><path d="M6.7 9.6h11.6" stroke="#6e6e6a" stroke-width="1"/><path d="M9 6h7.2" stroke="#3c3c3c" stroke-width="1.6" stroke-linecap="round"/><path d="M9 13.4h6.4" stroke="#3c3c3c" stroke-width="1.1"/><path d="M18.2 13.2h5.6L21 16.8z" fill="#3c3c3c"/></svg><div class="t" style="left:858px;top:565.69px;font-size:11px;color:#000;font-weight:normal;font-style:normal;letter-spacing:-0.15px;">Wrap lines to</div><div class="a" style="left:954px;top:561px;width:152px;height:19px;background:#fff;border:1px solid #adadad;border-radius:3px"></div><div style="position:absolute;left:1091px;top:562px;width:1px;height:17px;background:#adadad"></div><svg class="a" style="left:1094px;top:563px" width="9" height="14"><path d="M1 6L4.5 2 8 6z M1 8L4.5 12 8 8z" fill="#555"/></svg><div class="t" style="left:958px;top:565.49px;font-size:11px;color:#000;font-weight:normal;font-style:normal;letter-spacing:-0.15px;">No automatic wrapping</div><svg class="a" style="left:1114px;top:561px" width="25" height="20" viewBox="0 0 25 20"><path d="M1 9.4L6.5 3.6V15.2z" fill="#8a8a8a"/><rect x="6.7" y="2.7" width="11.6" height="14.5" fill="#fff" stroke="#6e6e6a" stroke-width="1"/><path d="M6.7 9.6h11.6" stroke="#6e6e6a" stroke-width="1"/><path d="M9 6h7.2" stroke="#3c3c3c" stroke-width="1.6" stroke-linecap="round"/><path d="M9 13.4h6.4" stroke="#3c3c3c" stroke-width="1.1"/><path d="M18.2 13.2h5.6L21 16.8z" fill="#3c3c3c"/></svg><div class="a" style="left:954px;top:590px;width:152px;height:21px;background:linear-gradient(#fdfdfd,#ececec);border:1px solid #adadad;border-radius:3px"></div><div class="t" style="left:958px;top:595.49px;font-size:11px;color:#000;font-weight:normal;font-style:normal;letter-spacing:-0.15px;">Maximum line length</div><svg class="a" style="left:1089px;top:597px" width="10" height="6"><path d="M1 1h8L5 5z" fill="#444"/></svg><div class="t" style="left:858px;top:625.69px;font-size:11px;color:#000;font-weight:normal;font-style:normal;letter-spacing:-0.15px;">Line height</div><div class="a" style="left:954px;top:621px;width:152px;height:19px;background:#fff;border:1px solid #adadad;border-radius:3px"></div><div style="position:absolute;left:1091px;top:622px;width:1px;height:17px;background:#adadad"></div><svg class="a" style="left:1094px;top:623px" width="9" height="14"><path d="M1 6L4.5 2 8 6z M1 8L4.5 12 8 8z" fill="#555"/></svg><div class="t" style="left:958px;top:625.49px;font-size:11px;color:#000;font-weight:normal;font-style:normal;letter-spacing:-0.15px;">1.00 line</div><svg class="a" style="left:1114px;top:621px" width="25" height="20" viewBox="0 0 25 20"><path d="M1 9.4L6.5 3.6V15.2z" fill="#8a8a8a"/><rect x="6.7" y="2.7" width="11.6" height="14.5" fill="#fff" stroke="#6e6e6a" stroke-width="1"/><path d="M6.7 9.6h11.6" stroke="#6e6e6a" stroke-width="1"/><path d="M9 6h7.2" stroke="#3c3c3c" stroke-width="1.6" stroke-linecap="round"/><path d="M9 13.4h6.4" stroke="#3c3c3c" stroke-width="1.1"/><path d="M18.2 13.2h5.6L21 16.8z" fill="#3c3c3c"/></svg><div class="t" style="left:858px;top:658.69px;font-size:11px;color:#000;font-weight:normal;font-style:normal;letter-spacing:-0.15px;">Alignment</div><div class="a" style="left:954px;top:652px;width:152px;height:21px;background:linear-gradient(#fdfdfd,#ececec);border:1px solid #adadad;border-radius:3px"></div><div class="t" style="left:958px;top:657.49px;font-size:11px;color:#000;font-weight:normal;font-style:normal;letter-spacing:-0.15px;">Follow Label Placement</div><svg class="a" style="left:1089px;top:659px" width="10" height="6"><path d="M1 1h8L5 5z" fill="#444"/></svg><svg class="a" style="left:1114px;top:653px" width="25" height="20" viewBox="0 0 25 20"><path d="M1 9.4L6.5 3.6V15.2z" fill="#8a8a8a"/><rect x="6.7" y="2.7" width="11.6" height="14.5" fill="#fff" stroke="#6e6e6a" stroke-width="1"/><path d="M6.7 9.6h11.6" stroke="#6e6e6a" stroke-width="1"/><path d="M9 6h7.2" stroke="#3c3c3c" stroke-width="1.6" stroke-linecap="round"/><path d="M9 13.4h6.4" stroke="#3c3c3c" stroke-width="1.1"/><path d="M18.2 13.2h5.6L21 16.8z" fill="#3c3c3c"/></svg><div class="a" style="left:838px;top:687px;width:14px;height:14px;background:#fff;border:1px solid #6e6e6e"></div><div class="t" style="left:857px;top:688.69px;font-size:11px;color:#000;font-weight:normal;font-style:normal;letter-spacing:-0.15px;">Formatted numbers</div><svg class="a" style="left:966px;top:684px" width="25" height="20" viewBox="0 0 25 20"><path d="M1 9.4L6.5 3.6V15.2z" fill="#8a8a8a"/><rect x="6.7" y="2.7" width="11.6" height="14.5" fill="#fff" stroke="#6e6e6a" stroke-width="1"/><path d="M6.7 9.6h11.6" stroke="#6e6e6a" stroke-width="1"/><path d="M9 6h7.2" stroke="#3c3c3c" stroke-width="1.6" stroke-linecap="round"/><path d="M9 13.4h6.4" stroke="#3c3c3c" stroke-width="1.1"/><path d="M18.2 13.2h5.6L21 16.8z" fill="#3c3c3c"/></svg><div class="t" style="left:858px;top:721.69px;font-size:11px;color:#8c8c8c;font-weight:normal;font-style:normal;letter-spacing:-0.15px;">Decimal places</div><div class="a" style="left:936px;top:717px;width:170px;height:19px;background:#f0f0f0;border:1px solid #c9c9c9;border-radius:3px"></div><div style="position:absolute;left:1091px;top:718px;width:1px;height:17px;background:#c9c9c9"></div><svg class="a" style="left:1094px;top:719px" width="9" height="14"><path d="M1 6L4.5 2 8 6z M1 8L4.5 12 8 8z" fill="#b0b0b0"/></svg><div class="t" style="left:940px;top:721.49px;font-size:11px;color:#8c8c8c;font-weight:normal;font-style:normal;letter-spacing:-0.15px;">3</div><svg class="a" style="left:1114px;top:717px" width="25" height="20" viewBox="0 0 25 20"><path d="M1 9.4L6.5 3.6V15.2z" fill="#dcdcdc"/><rect x="6.7" y="2.7" width="11.6" height="14.5" fill="#fff" stroke="#c8c8c8" stroke-width="1"/><path d="M6.7 9.6h11.6" stroke="#c8c8c8" stroke-width="1"/><path d="M9 6h7.2" stroke="#cfcfcf" stroke-width="1.6" stroke-linecap="round"/><path d="M9 13.4h6.4" stroke="#cfcfcf" stroke-width="1.1"/><path d="M18.2 13.2h5.6L21 16.8z" fill="#cfcfcf"/></svg><div class="a" style="left:858px;top:750px;width:14px;height:14px;background:#fff;border:1px solid #c4c4c4"></div><div class="t" style="left:876px;top:752.69px;font-size:11px;color:#8c8c8c;font-weight:normal;font-style:normal;letter-spacing:-0.15px;">Show plus sign</div><svg class="a" style="left:1114px;top:748px" width="25" height="20" viewBox="0 0 25 20"><path d="M1 9.4L6.5 3.6V15.2z" fill="#dcdcdc"/><rect x="6.7" y="2.7" width="11.6" height="14.5" fill="#fff" stroke="#c8c8c8" stroke-width="1"/><path d="M6.7 9.6h11.6" stroke="#c8c8c8" stroke-width="1"/><path d="M9 6h7.2" stroke="#cfcfcf" stroke-width="1.6" stroke-linecap="round"/><path d="M9 13.4h6.4" stroke="#cfcfcf" stroke-width="1.1"/><path d="M18.2 13.2h5.6L21 16.8z" fill="#cfcfcf"/></svg><div style="position:absolute;left:838px;top:821px;width:24px;height:22px;background:linear-gradient(#fdfdfd,#ececec);border:1px solid #adadad;border-radius:3px"></div><svg class="a" style="left:842px;top:824px" width="16" height="16"><path d="M12 13c2-4 0-8-4-8H5" stroke="#f08a24" stroke-width="2.6" fill="none"/><path d="M1 5l5-4v8z" fill="#f08a24"/></svg><div style="position:absolute;left:868px;top:821px;width:24px;height:22px;background:linear-gradient(#fdfdfd,#ececec);border:1px solid #adadad;border-radius:3px"></div><svg class="a" style="left:872px;top:824px" width="16" height="16"><path d="M4 13c-2-4 0-8 4-8h3" stroke="#4caf50" stroke-width="2.6" fill="none"/><path d="M15 5l-5-4v8z" fill="#4caf50"/></svg><div class="a" style="left:981px;top:824px;width:14px;height:14px;background:#fff;border:1px solid #6e6e6e"></div><svg class="a" style="left:981px;top:824px" width="14" height="14" viewBox="0 0 13 13"><path d="M2.8 6.6L5.2 10.2 10.2 2.2" fill="none" stroke="#000" stroke-width="1.7"/></svg><div class="t" style="left:999px;top:826.69px;font-size:11px;color:#000;font-weight:normal;font-style:normal;letter-spacing:-0.15px;">Live update</div><div style="position:absolute;left:1068px;top:821px;width:80px;height:21px;background:linear-gradient(#fdfdfd,#ececec);border:1px solid #adadad;border-radius:3px"></div><div class="t" style="left:1093px;top:826.69px;font-size:11px;color:#000;font-weight:normal;font-style:normal;letter-spacing:-0.15px;">Apply</div><div style="position:absolute;left:0px;top:846px;width:1151px;height:28px;background:#f0f0f0"></div><div style="position:absolute;left:0px;top:873px;width:1151px;height:1px;background:#fafafa"></div><div style="position:absolute;left:0px;top:874px;width:1152px;height:1px;background:#103850"></div><div style="position:absolute;left:1151px;top:854px;width:1px;height:21px;background:#103850"></div><div style="position:absolute;left:1147px;top:861px;width:1px;height:1px;background:#b0b0b0"></div><div style="position:absolute;left:1144px;top:864px;width:1px;height:1px;background:#b0b0b0"></div><div style="position:absolute;left:1147px;top:864px;width:1px;height:1px;background:#b0b0b0"></div><div style="position:absolute;left:1141px;top:867px;width:1px;height:1px;background:#b0b0b0"></div><div style="position:absolute;left:1144px;top:867px;width:1px;height:1px;background:#b0b0b0"></div><div style="position:absolute;left:1147px;top:867px;width:1px;height:1px;background:#b0b0b0"></div><div style="position:absolute;left:1138px;top:870px;width:1px;height:1px;background:#b0b0b0"></div><div style="position:absolute;left:1141px;top:870px;width:1px;height:1px;background:#b0b0b0"></div><div style="position:absolute;left:1144px;top:870px;width:1px;height:1px;background:#b0b0b0"></div><div style="position:absolute;left:1147px;top:870px;width:1px;height:1px;background:#b0b0b0"></div><div style="position:absolute;left:5px;top:849px;width:199px;height:22px;background:#fff;border:1px solid #a9a9a9;border-radius:3px"></div><svg class="a" style="left:12px;top:853px" width="14" height="14"><circle cx="5.5" cy="5.5" r="4.3" fill="none" stroke="#777" stroke-width="1.3"/><path d="M8.5 8.5l4.5 4.5" stroke="#777" stroke-width="1.5"/></svg><div class="t" style="left:32px;top:856.43px;font-size:11.3px;color:#777;font-weight:normal;font-style:normal;letter-spacing:-0.1px;">Type to locate (Ctrl+K)</div><div class="t" style="left:324px;top:856.43px;font-size:11.3px;color:#000;font-weight:normal;font-style:normal;letter-spacing:-0.1px;">Coordinate</div><div style="position:absolute;left:380px;top:849px;width:103px;height:22px;background:#fff;border:1px solid #a9a9a9;border-radius:3px"></div><div class="t" style="left:385px;top:856.43px;font-size:11.3px;color:#000;font-weight:normal;font-style:normal;letter-spacing:-0.1px;">20.5946,-34.0182</div><svg class="a" style="left:486px;top:851px" width="18" height="18" viewBox="0 0 18 18"><path d="M3 6c0-4 8-4 8 0v6c0 4-8 4-8 0z" fill="#5a5a5a" transform="rotate(-25 7 9)"/><path d="M5 5l5 8M10 5l-5 8" stroke="#eee" stroke-width="1"/><circle cx="10" cy="13" r="2.5" fill="#ddd" stroke="#555"/><path d="M12 4l4-2M13 7l3-1" stroke="#555" stroke-width="1.2"/></svg><div class="t" style="left:515px;top:856.43px;font-size:11.3px;color:#000;font-weight:normal;font-style:normal;letter-spacing:-0.1px;">Scale</div><div style="position:absolute;left:544px;top:849px;width:82px;height:22px;background:#fff;border:1px solid #a9a9a9;border-radius:3px"></div><div style="position:absolute;left:603px;top:850px;width:1px;height:20px;background:#d0d0d0"></div><svg class="a" style="left:610px;top:857px" width="10" height="6"><path d="M1 1h8L5 5z" fill="#444"/></svg><div class="t" style="left:549px;top:856.43px;font-size:11.3px;color:#000;font-weight:normal;font-style:normal;letter-spacing:-0.1px;">1:100000</div><svg class="a" style="left:636px;top:851px" width="14" height="17" viewBox="0 0 14 17"><path d="M3.5 8V5a3.5 3.5 0 0 1 7 0v3" stroke="#555" stroke-width="2" fill="none"/><rect x="2" y="8" width="10" height="8" rx="1" fill="#555"/></svg><div class="t" style="left:657px;top:856.43px;font-size:11.3px;color:#000;font-weight:normal;font-style:normal;letter-spacing:-0.1px;">Magnifier</div><div class="a" style="left:706px;top:849px;width:86px;height:22px;background:#fff;border:1px solid #adadad;border-radius:3px"></div><div style="position:absolute;left:777px;top:850px;width:1px;height:20px;background:#adadad"></div><svg class="a" style="left:780px;top:853px" width="9" height="14"><path d="M1 6L4.5 2 8 6z M1 8L4.5 12 8 8z" fill="#555"/></svg><div class="t" style="left:710px;top:855.73px;font-size:11.3px;color:#000;font-weight:normal;font-style:normal;letter-spacing:-0.1px;">100%</div><div class="t" style="left:801px;top:856.43px;font-size:11.3px;color:#000;font-weight:normal;font-style:normal;letter-spacing:-0.1px;">Rotation</div><div class="a" style="left:852px;top:850px;width:84px;height:21px;background:#fff;border:1px solid #adadad;border-radius:3px"></div><div style="position:absolute;left:921px;top:851px;width:1px;height:19px;background:#adadad"></div><svg class="a" style="left:924px;top:853px" width="9" height="14"><path d="M1 6L4.5 2 8 6z M1 8L4.5 12 8 8z" fill="#555"/></svg><div class="t" style="left:856px;top:856.23px;font-size:11.3px;color:#000;font-weight:normal;font-style:normal;letter-spacing:-0.1px;">0.0 &#176;</div><div class="a" style="left:943px;top:852px;width:15px;height:15px;background:#fff;border:1px solid #6e6e6e"></div><svg class="a" style="left:943px;top:852px" width="15" height="15" viewBox="0 0 13 13"><path d="M2.8 6.6L5.2 10.2 10.2 2.2" fill="none" stroke="#000" stroke-width="1.7"/></svg><div class="t" style="left:961px;top:856.43px;font-size:11.3px;color:#000;font-weight:normal;font-style:normal;letter-spacing:-0.1px;">Render</div><svg class="a" style="left:1012px;top:852px" width="16" height="16" viewBox="0 0 16 16"><circle cx="8" cy="8" r="6.5" fill="#bbb" stroke="#777"/><path d="M1.5 8h13M8 1.5v13M3 4.5h10M3 11.5h10" stroke="#666" stroke-width="0.8"/><ellipse cx="8" cy="8" rx="3" ry="6.5" fill="none" stroke="#666" stroke-width="0.8"/></svg><div class="t" style="left:1032px;top:856.43px;font-size:11.3px;color:#000;font-weight:normal;font-style:normal;letter-spacing:-0.1px;">EPSG:4326</div><svg class="a" style="left:1102px;top:851px" width="22" height="18" viewBox="0 0 22 18"><ellipse cx="10" cy="8" rx="9" ry="7" fill="#555"/><path d="M5 13l-2 4 6-3z" fill="#555"/><circle cx="6" cy="8" r="1.3" fill="#fff"/><circle cx="10" cy="8" r="1.3" fill="#fff"/><circle cx="14" cy="8" r="1.3" fill="#fff"/></svg></body></html>
